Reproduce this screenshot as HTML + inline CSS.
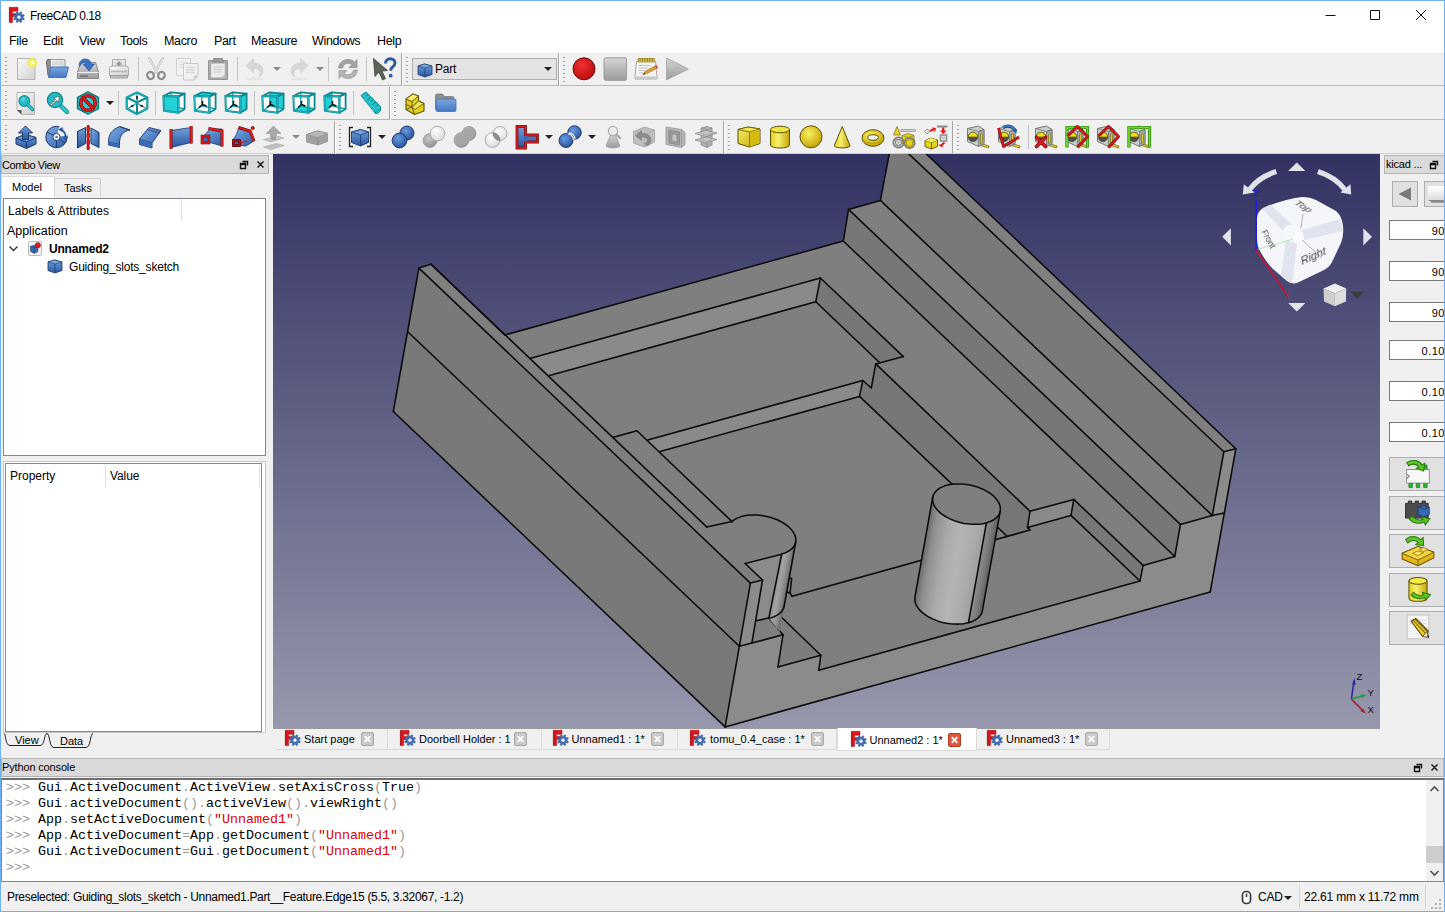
<!DOCTYPE html><html><head><meta charset="utf-8"><title>FreeCAD 0.18</title><style>
*{box-sizing:border-box;margin:0;padding:0}
html,body{width:1445px;height:912px;overflow:hidden;background:#f0f0f0;font-family:"Liberation Sans",sans-serif;font-size:12px;color:#000}
.a{position:absolute}
.t{position:absolute;white-space:nowrap;line-height:1}
#win{position:absolute;left:0;top:0;width:1445px;height:912px;border:1px solid #6eb0f0;background:#f0f0f0;overflow:hidden}
.mono{font-family:"Liberation Mono",monospace;font-size:13.33px}
.hl{position:absolute;height:1px;background:#a0a0a0}
.vl{position:absolute;width:1px;background:#a0a0a0}
.sep{position:absolute;width:1px;background:#c4c4c4;height:24px}
.grip{position:absolute;width:2px;height:24px;background:repeating-linear-gradient(#f0f0f0 0 1px,#9c9c9c 1px 2.5px,#fdfdfd 2.5px 3px,#f0f0f0 3px 4px)}
.dd{position:absolute;width:0;height:0;border-left:4px solid transparent;border-right:4px solid transparent;border-top:4px solid #222}
.ddg{border-top-color:#8a8a8a}
svg{position:absolute;overflow:visible}
</style></head><body><div id="win"><div class="a" style="left:0;top:0;width:1443px;height:51px;background:#fff"></div><div class="hl" style="left:0;top:51px;width:1443px;background:#f8f8f8"></div><svg style="left:8px;top:6px" width="16" height="16" viewBox="0 0 16 16"><path d="M.3 .3h8.700v4h-5.400v2.300h4v3h-4v6h-3.300z" fill="#e0161c" stroke="#8a1014" stroke-width=".5"/><path d="M.800 .8v14.500" stroke="#a01016" stroke-width=".8"/><path d="M15.41 11.64L14.84 13.01L13.32 12.61L12.41 13.52L12.81 15.04L11.44 15.61L10.64 14.25L9.36 14.25L8.56 15.61L7.19 15.04L7.59 13.52L6.68 12.61L5.16 13.01L4.59 11.64L5.95 10.84L5.95 9.56L4.59 8.76L5.16 7.39L6.68 7.79L7.59 6.88L7.19 5.36L8.56 4.79L9.36 6.15L10.64 6.15L11.44 4.79L12.81 5.36L12.41 6.88L13.32 7.79L14.84 7.39L15.41 8.76L14.05 9.56L14.05 10.84Z" fill="#4470b4" stroke="#2c4e8c" stroke-width=".5"/><circle cx="10" cy="10.200" r="1.600" fill="#fff"/></svg><div class="t" style="left:29px;top:9px;font-size:12px;letter-spacing:-0.5px">FreeCAD 0.18</div><div class="t" style="left:8px;top:34px;font-size:12.5px;letter-spacing:-0.35px">File</div><div class="t" style="left:42px;top:34px;font-size:12.5px;letter-spacing:-0.35px">Edit</div><div class="t" style="left:78px;top:34px;font-size:12.5px;letter-spacing:-0.35px">View</div><div class="t" style="left:119px;top:34px;font-size:12.5px;letter-spacing:-0.35px">Tools</div><div class="t" style="left:163px;top:34px;font-size:12.5px;letter-spacing:-0.35px">Macro</div><div class="t" style="left:213px;top:34px;font-size:12.5px;letter-spacing:-0.35px">Part</div><div class="t" style="left:250px;top:34px;font-size:12.5px;letter-spacing:-0.35px">Measure</div><div class="t" style="left:311px;top:34px;font-size:12.5px;letter-spacing:-0.35px">Windows</div><div class="t" style="left:376px;top:34px;font-size:12.5px;letter-spacing:-0.35px">Help</div><svg style="left:1319px;top:4px" width="120" height="20"><path d="M5.5 10.5h10M50.5 5.5h9v9h-9zM96 5l10 10M106 5l-10 10" fill="none" stroke="#111" stroke-width="1"/></svg><div class="hl" style="left:0;top:84px;width:1443px;background:#b9b9b9"></div><div class="hl" style="left:0;top:118px;width:1443px;background:#b9b9b9"></div><div class="hl" style="left:0;top:152px;width:1443px;background:#d0d0d0"></div><svg width="0" height="0" style="left:0;top:0"><defs>
<linearGradient id="gB" x1="0" y1="0" x2="0" y2="1"><stop offset="0" stop-color="#6fa0dc"/><stop offset="1" stop-color="#2a56a0"/></linearGradient>
<linearGradient id="gB3" x1="0" y1="0" x2="0" y2="1"><stop offset="0" stop-color="#79a6e0"/><stop offset="1" stop-color="#4678c4"/></linearGradient>
<linearGradient id="gB2" x1="0" y1="0" x2="1" y2="1"><stop offset="0" stop-color="#7fb0e8"/><stop offset="1" stop-color="#2c5aa6"/></linearGradient>
<linearGradient id="gY" x1="0" y1="0" x2="1" y2="1"><stop offset="0" stop-color="#f8f060"/><stop offset="1" stop-color="#c8a80a"/></linearGradient>
<linearGradient id="gY2" x1="0" y1="0" x2="1" y2="0"><stop offset="0" stop-color="#e6cc18"/><stop offset=".4" stop-color="#f8f070"/><stop offset="1" stop-color="#c4a408"/></linearGradient>
<linearGradient id="gG" x1="0" y1="0" x2="0" y2="1"><stop offset="0" stop-color="#d4d4d4"/><stop offset="1" stop-color="#9c9c9c"/></linearGradient>
<linearGradient id="gG2" x1="0" y1="0" x2="1" y2="1"><stop offset="0" stop-color="#fafafa"/><stop offset="1" stop-color="#d0d0d0"/></linearGradient>
<linearGradient id="gT" x1="0" y1="0" x2="1" y2="1"><stop offset="0" stop-color="#34dce2"/><stop offset="1" stop-color="#14b4bc"/></linearGradient>
<radialGradient id="gR" cx=".4" cy=".35" r=".7"><stop offset="0" stop-color="#f03030"/><stop offset="1" stop-color="#b80c0c"/></radialGradient>
<radialGradient id="gYs" cx=".4" cy=".35" r=".7"><stop offset="0" stop-color="#f8f060"/><stop offset="1" stop-color="#c4a000"/></radialGradient>
<radialGradient id="gBs" cx=".4" cy=".35" r=".7"><stop offset="0" stop-color="#6a9ce0"/><stop offset="1" stop-color="#244e98"/></radialGradient>
<radialGradient id="gGs" cx=".4" cy=".35" r=".7"><stop offset="0" stop-color="#c8c8c8"/><stop offset="1" stop-color="#8e8e8e"/></radialGradient>
<radialGradient id="gWs" cx=".4" cy=".35" r=".7"><stop offset="0" stop-color="#ffffff"/><stop offset="1" stop-color="#d8d8d8"/></radialGradient>
</defs></svg><svg style="left:13px;top:56px" width="24" height="24" viewBox="0 0 24 24"><path d="M3.500 1.500h17.500v21h-17.500z" fill="url(#gG2)" stroke="#b4b4b4"/><circle cx="18.300" cy="5.700" r="4.800" fill="#f2ec3c" opacity=".8"/><circle cx="18.300" cy="5.700" r="2.900" fill="#f8f480"/><circle cx="18.300" cy="5.700" r="1.200" fill="#fffff4"/></svg><svg style="left:44px;top:56px" width="24" height="24" viewBox="0 0 24 24"><path d="M1.500 4.500l1-2h6l1 2h3v14h-9.500z" fill="#8c8c8c" stroke="#6a6a6a"/><path d="M5.500 2.500h14.500v12h-14.500z" fill="url(#gG2)" stroke="#9a9a9a"/><path d="M7 5h11M7 7h11" stroke="#c8c8c8"/><path d="M5.800 10h17.700l-2.500 10.500h-17.500z" fill="url(#gB3)" stroke="#4676bc"/></svg><svg style="left:75px;top:56px" width="24" height="24" viewBox="0 0 24 24"><path d="M1.500 15l3-9.500h15l3 9.500v6.500h-21z" fill="url(#gG)" stroke="#8a8a8a"/><path d="M1.500 15.500h21" stroke="#f0f0f0"/><path d="M4 19h8" stroke="#6e6e6e" stroke-width="1.400"/><path d="M3.500 9.500c-1.500-5 3.500-9 8.500-7c2 1 3 2.500 3.500 4.500h3l-5.500 7l-6-7h3.200c-.5-2-3.700-3-6.700 2.500z" fill="#3a72c0" stroke="#2a5a9e" stroke-width=".7"/></svg><svg style="left:106px;top:56px" width="24" height="24" viewBox="0 0 24 24"><path d="M5.500 2.500h13v8h-13z" fill="#e4e4e4" stroke="#b0b0b0"/><path d="M12 4l3.500 3.500h-2v2.500h-3v-2.500h-2z" fill="#9a9a9a"/><path d="M2.500 11.500c0-1.500 1-2.500 2.500-2.500h14c1.500 0 2.500 1 2.500 2.500v7h-19z" fill="url(#gG2)" stroke="#a8a8a8"/><path d="M3.500 18.500h17v2.500h-17z" fill="#c4c4c4" stroke="#9a9a9a"/><path d="M4 14.500h16" stroke="#b4b4b4" stroke-width="1.600"/></svg><svg style="left:143px;top:56px" width="24" height="24" viewBox="0 0 24 24"><path d="M5.500 1.500l7.500 14M18.500 1.500l-7.500 14" stroke="#c4c4c4" stroke-width="2.600" stroke-linecap="round"/><path d="M5.500 1.500l7.500 14M18.500 1.500l-7.500 14" stroke="#e8e8e8" stroke-width="1" stroke-linecap="round"/><ellipse cx="6.500" cy="18.500" rx="3.300" ry="3.600" transform="rotate(-30 6.500 18.500)" fill="none" stroke="#8e8e8e" stroke-width="2.200"/><ellipse cx="17.500" cy="18.500" rx="3.300" ry="3.600" transform="rotate(30 17.500 18.500)" fill="none" stroke="#8e8e8e" stroke-width="2.200"/></svg><svg style="left:174px;top:56px" width="24" height="24" viewBox="0 0 24 24"><path d="M1.500 1.500h14v17h-14z" fill="#f2f2f2" stroke="#d0d0d0"/><path d="M4 5h9M4 7.500h9M4 10h9" stroke="#dcdcdc"/><path d="M8.500 6.500h14.500v12.500l-4 4h-10.500z" fill="#f2f2f2" stroke="#cacaca"/><path d="M11 10.500h9M11 13h9M11 15.500h9" stroke="#d8d8d8" stroke-width="1.400"/><path d="M23 19h-4v4z" fill="#d8d8d8" stroke="#c0c0c0" stroke-width=".6"/></svg><svg style="left:205px;top:56px" width="24" height="24" viewBox="0 0 24 24"><path d="M2.500 3.500h19v19h-19z" fill="#a8a8a8" stroke="#969696"/><path d="M5 6.500h14v14h-14z" fill="#ececec" stroke="#c0c0c0" stroke-width=".6"/><path d="M7.500 1.500h9l1 3.500h-11z" fill="#9a9a9a" stroke="#858585" stroke-width=".8"/><path d="M7.500 10h9M7.500 12.500h9M7.500 15h7" stroke="#d2d2d2" stroke-width="1.300"/><path d="M19 17v3.500h-3.500z" fill="#bdbdbd"/></svg><svg style="left:242px;top:56px" width="24" height="24" viewBox="0 0 24 24"><path d="M3 8.500l7.500-7v4.500c6 0 9.500 3.500 9.500 8c0 3-1.500 5-4 6c1-1.500 1.500-3 1-5c-.7-2.500-3-3.500-6.500-3.500v4.500z" fill="#d6d6d6" stroke="#cfcfcf" stroke-width=".6"/><ellipse cx="12" cy="22" rx="9" ry="1.500" fill="#dedede" opacity=".6"/></svg><svg style="left:286px;top:56px" width="24" height="24" viewBox="0 0 24 24"><path d="M21 8.500l-7.500-7v4.500c-6 0-9.500 3.500-9.500 8c0 3 1.500 5 4 6c-1-1.500-1.500-3-1-5c.7-2.500 3-3.500 6.500-3.500v4.500z" fill="#d6d6d6" stroke="#cfcfcf" stroke-width=".6"/><ellipse cx="12" cy="22" rx="9" ry="1.500" fill="#dedede" opacity=".6"/></svg><svg style="left:334.5px;top:56px" width="24" height="24" viewBox="0 0 24 24"><path d="M2.500 11c.5-5 4-8.500 9.500-8.500c3 0 5 1 6.500 2.500l2.500-2.500v8h-8l2.800-2.800c-1-1-2.300-1.500-3.800-1.500c-2.800 0-4.800 2-5.500 4.800z" fill="#a4a4a4" stroke="#8e8e8e" stroke-width=".7"/><path d="M21.500 13c-.5 5-4 8.500-9.500 8.500c-3 0-5-1-6.500-2.500l-2.500 2.500v-8h8l-2.800 2.800c1 1 2.300 1.500 3.800 1.500c2.800 0 4.800-2 5.500-4.800z" fill="#b4b4b4" stroke="#989898" stroke-width=".7"/></svg><svg style="left:370.5px;top:56px" width="24" height="24" viewBox="0 0 24 24"><path d="M1.500 1.500l1.500 18l4-4.500l3.500 8l3-1.400l-3.600-7.600l5.600-.5z" fill="#5c6258" stroke="#3e423a" stroke-width=".8"/><path d="M13.500 6.500c0-3 2-4.800 4.800-4.800c2.700 0 4.700 1.800 4.700 4.300c0 2.200-1.300 3.200-2.600 4.200c-1.100.9-1.700 1.600-1.700 3.600" fill="none" stroke="#2c5a9c" stroke-width="2.900"/><circle cx="18.700" cy="18.700" r="1.900" fill="#2c5a9c"/></svg><svg style="left:571px;top:56px" width="24" height="24" viewBox="0 0 24 24"><circle cx="12" cy="11.800" r="11" fill="url(#gR)" stroke="#6e0c0c" stroke-width="1"/></svg><svg style="left:602px;top:56px" width="24" height="24" viewBox="0 0 24 24"><rect x="1" y="0.800" width="22.500" height="22.500" rx="1.500" fill="url(#gG)" stroke="#9c9c9c"/></svg><svg style="left:633px;top:56px" width="24" height="24" viewBox="0 0 24 24"><path d="M2.500 4.500h19l1.500 15.500v2h-22v-2z" fill="#f4f4f4" stroke="#a8a8a8"/><path d="M1.500 20.500h21.500" stroke="#c8c8c8" stroke-width="2"/><path d="M4 1.500h16.500v3.500h-16.500z" fill="#d4b848" stroke="#9c8420" stroke-width=".7"/><path d="M6 1v3M8.500 1v3M11 1v3M13.500 1v3M16 1v3M18.500 1v3" stroke="#8a7418" stroke-width=".8"/><path d="M5 8.500h11M5 11h9M5 13.500h6M5 16h4" stroke="#c4c4c4" stroke-width="1.200"/><path d="M9 17.500l2.500-3.500l10.500-5.500l1.500 2.500l-10.500 5.500z" fill="#e0a030" stroke="#9a6a18" stroke-width=".6"/><path d="M21 8.800l1.700-.8l1.300 2.400l-1.600 1z" fill="#e04848"/><path d="M9 17.500l1.200-1.700l1 1.600z" fill="#444"/></svg><svg style="left:664px;top:56px" width="24" height="24" viewBox="0 0 24 24"><path d="M1.500 1l22 11l-22 11z" fill="url(#gG)" stroke="#a4a4a4" stroke-width=".8"/></svg><svg style="left:13px;top:90px" width="24" height="24" viewBox="0 0 24 24"><path d="M3 1.500h17.500v22h-13l-4.500-4.500z" fill="url(#gG2)" stroke="#b4b4b4"/><path d="M3 19l4.500 0v4.500z" fill="#555"/><circle cx="10.300" cy="10" r="5.300" fill="#22bcc4" stroke="#128e96" stroke-width="1.200"/><circle cx="9" cy="8.500" r="2.200" fill="#5cd8de" opacity=".8"/><path d="M14 14l4.500 4.500" stroke="#128e96" stroke-width="3.400" stroke-linecap="round"/><path d="M14 14l4.500 4.500" stroke="#28c4cc" stroke-width="1.800" stroke-linecap="round"/></svg><svg style="left:44.5px;top:90px" width="24" height="24" viewBox="0 0 24 24"><path d="M14 14l7 7" stroke="#0f858c" stroke-width="4.400" stroke-linecap="round"/><path d="M14 14l7 7" stroke="#2cc8d0" stroke-width="2.600" stroke-linecap="round"/><circle cx="9" cy="9" r="7.600" fill="#22bcc4" stroke="#0f858c" stroke-width="1.300"/><path d="M4.500 13.500l5-5l-1.800-1.800l6-1.400l-1.400 6l-1.800-1.800l-5 5z" fill="#f4f4f4" stroke="#555" stroke-width=".7"/></svg><svg style="left:75px;top:90px" width="24" height="24" viewBox="0 0 24 24"><path d="M12 .8l10.500 5.600v11.200l-10.500 5.600l-10.500-5.600v-11.200z" fill="#20b8c0" stroke="#0b7a82" stroke-width="1.300"/><path d="M12 3.500l8 4.300v8.400l-8 4.300l-8-4.300v-8.400z" fill="#30ccd4"/><circle cx="12" cy="12" r="7.300" fill="none" stroke="#7c0c0c" stroke-width="3.600"/><circle cx="12" cy="12" r="7.300" fill="none" stroke="#dc1c1c" stroke-width="2.300"/><path d="M6.800 6.800l10.400 10.400" stroke="#7c0c0c" stroke-width="3.600"/><path d="M6.800 6.800l10.400 10.400" stroke="#dc1c1c" stroke-width="2.300"/></svg><svg style="left:124px;top:90px" width="24" height="24" viewBox="0 0 24 24"><path d="M12 1.500l10.300 5v11l-10.300 5.500l-10.300-5.500v-11z" fill="#fff" stroke="#0b8890" stroke-width="2.200" stroke-linejoin="round"/><path d="M1.700 6.500l10.300 5l10.300-5M12 11.500v11.500" fill="none" stroke="#0b8890" stroke-width="2"/><path d="M12 1.500v9M12 12l-9 5.500M12 12l9 5.500" stroke="#14a4ac" stroke-width="1.200"/><path d="M12 5v3.500M6 15.500l2.500-1M18 15.500l-2.500-1" stroke="#111" stroke-width="1.500"/><path d="M12 1.500l10.300 5v11l-10.300 5.500l-10.300-5.500v-11z" fill="none" stroke="#28c8d0" stroke-width=".8"/></svg><svg style="left:161px;top:90px" width="24" height="24" viewBox="0 0 24 24"><polygon points="1.4,5 8.800,1.400 22.600,2.600 22.600,18 16.400,21.800 1.900,19.800" fill="#fff"/><path d="M8.800 1.400v13.400l-6.900 5M9 14.800l13.600 3.200" fill="none" stroke="#14a0a8" stroke-width="1.300"/><polygon points="1.4,5 16.4,5.400 16.400,21.800 1.900,19.800" fill="#24d0d8"/><polygon points="1.4,5 16.4,5.400 16.400,21.800 1.900,19.800" fill="none" stroke="#0b8890" stroke-width="2" stroke-linejoin="round"/><polygon points="1.4,5 8.800,1.400 22.600,2.600 16.400,5.400" fill="none" stroke="#0b8890" stroke-width="1.800" stroke-linejoin="round"/><polygon points="16.400,5.400 22.600,2.600 22.600,18 16.400,21.800" fill="none" stroke="#0b8890" stroke-width="1.800" stroke-linejoin="round"/><polygon points="1.4,5 16.4,5.400 16.400,21.800 1.900,19.800" fill="none" stroke="#2ccad2" stroke-width=".7"/></svg><svg style="left:192px;top:90px" width="24" height="24" viewBox="0 0 24 24"><polygon points="1.4,5 8.800,1.400 22.600,2.600 22.600,18 16.400,21.800 1.900,19.800" fill="#fff"/><path d="M8.800 1.400v13.400l-6.900 5M9 14.800l13.600 3.200" fill="none" stroke="#14a0a8" stroke-width="1.300"/><polygon points="1.4,5 8.800,1.400 22.600,2.600 16.400,5.400" fill="#24d0d8"/><path d="M9.500 10v3.500l-3.500 3M9.500 13.500l4 1.500" stroke="#111" stroke-width="1.500" fill="none"/><polygon points="1.4,5 16.4,5.400 16.400,21.800 1.900,19.800" fill="none" stroke="#0b8890" stroke-width="2" stroke-linejoin="round"/><polygon points="1.4,5 8.800,1.400 22.600,2.600 16.400,5.400" fill="none" stroke="#0b8890" stroke-width="1.800" stroke-linejoin="round"/><polygon points="16.400,5.400 22.600,2.600 22.600,18 16.400,21.800" fill="none" stroke="#0b8890" stroke-width="1.800" stroke-linejoin="round"/><polygon points="1.4,5 16.4,5.400 16.400,21.800 1.900,19.800" fill="none" stroke="#2ccad2" stroke-width=".7"/></svg><svg style="left:223px;top:90px" width="24" height="24" viewBox="0 0 24 24"><polygon points="1.4,5 8.800,1.400 22.600,2.600 22.600,18 16.400,21.800 1.900,19.800" fill="#fff"/><path d="M8.800 1.400v13.400l-6.900 5M9 14.800l13.600 3.200" fill="none" stroke="#14a0a8" stroke-width="1.300"/><polygon points="16.400,5.400 22.600,2.600 22.600,18 16.400,21.800" fill="#24d0d8"/><path d="M9.500 10v3.500l-3.500 3M9.500 13.500l4 1.500" stroke="#111" stroke-width="1.500" fill="none"/><polygon points="1.4,5 16.4,5.400 16.400,21.800 1.900,19.800" fill="none" stroke="#0b8890" stroke-width="2" stroke-linejoin="round"/><polygon points="1.4,5 8.800,1.400 22.600,2.600 16.400,5.400" fill="none" stroke="#0b8890" stroke-width="1.800" stroke-linejoin="round"/><polygon points="16.400,5.400 22.600,2.600 22.600,18 16.400,21.800" fill="none" stroke="#0b8890" stroke-width="1.800" stroke-linejoin="round"/><polygon points="1.4,5 16.4,5.400 16.400,21.800 1.900,19.800" fill="none" stroke="#2ccad2" stroke-width=".7"/></svg><svg style="left:260px;top:90px" width="24" height="24" viewBox="0 0 24 24"><polygon points="1.4,5 8.800,1.400 22.600,2.600 22.600,18 16.400,21.800 1.900,19.800" fill="#fff"/><polygon points="8.800,1.400 22.600,2.600 22.600,18 9,14.800" fill="#24d0d8"/><path d="M8.800 1.400v13.400l-6.900 5M9 14.800l13.600 3.200" fill="none" stroke="#14a0a8" stroke-width="1.300"/><path d="M9.500 10v3.500l-3.500 3M9.500 13.500l4 1.500" stroke="#111" stroke-width="1.500" fill="none"/><polygon points="1.4,5 16.4,5.400 16.400,21.800 1.900,19.800" fill="none" stroke="#0b8890" stroke-width="2" stroke-linejoin="round"/><polygon points="1.4,5 8.800,1.400 22.600,2.600 16.400,5.400" fill="none" stroke="#0b8890" stroke-width="1.800" stroke-linejoin="round"/><polygon points="16.400,5.400 22.600,2.600 22.600,18 16.400,21.800" fill="none" stroke="#0b8890" stroke-width="1.800" stroke-linejoin="round"/><polygon points="1.4,5 16.4,5.400 16.400,21.800 1.900,19.800" fill="none" stroke="#2ccad2" stroke-width=".7"/></svg><svg style="left:291px;top:90px" width="24" height="24" viewBox="0 0 24 24"><polygon points="1.4,5 8.800,1.400 22.600,2.600 22.600,18 16.400,21.800 1.900,19.800" fill="#fff"/><polygon points="1.900,19.800 9,14.800 22.600,18 16.400,21.800" fill="#24d0d8"/><path d="M8.800 1.400v13.400l-6.900 5M9 14.800l13.600 3.200" fill="none" stroke="#14a0a8" stroke-width="1.300"/><path d="M9.500 10v3.500l-3.500 3M9.500 13.500l4 1.500" stroke="#111" stroke-width="1.500" fill="none"/><polygon points="1.4,5 16.4,5.400 16.400,21.800 1.900,19.800" fill="none" stroke="#0b8890" stroke-width="2" stroke-linejoin="round"/><polygon points="1.4,5 8.800,1.400 22.600,2.600 16.400,5.400" fill="none" stroke="#0b8890" stroke-width="1.800" stroke-linejoin="round"/><polygon points="16.400,5.400 22.600,2.600 22.600,18 16.400,21.800" fill="none" stroke="#0b8890" stroke-width="1.800" stroke-linejoin="round"/><polygon points="1.4,5 16.4,5.400 16.400,21.800 1.900,19.800" fill="none" stroke="#2ccad2" stroke-width=".7"/></svg><svg style="left:322px;top:90px" width="24" height="24" viewBox="0 0 24 24"><polygon points="1.4,5 8.800,1.400 22.600,2.600 22.600,18 16.400,21.800 1.900,19.800" fill="#fff"/><polygon points="1.4,5 8.800,1.400 9,14.800 1.900,19.800" fill="#24d0d8"/><path d="M8.800 1.400v13.400l-6.900 5M9 14.800l13.600 3.200" fill="none" stroke="#14a0a8" stroke-width="1.300"/><path d="M9.500 10v3.500l-3.500 3M9.500 13.500l4 1.500" stroke="#111" stroke-width="1.500" fill="none"/><polygon points="1.4,5 16.4,5.400 16.400,21.800 1.900,19.800" fill="none" stroke="#0b8890" stroke-width="2" stroke-linejoin="round"/><polygon points="1.4,5 8.800,1.400 22.600,2.600 16.400,5.400" fill="none" stroke="#0b8890" stroke-width="1.800" stroke-linejoin="round"/><polygon points="16.400,5.400 22.600,2.600 22.600,18 16.400,21.800" fill="none" stroke="#0b8890" stroke-width="1.800" stroke-linejoin="round"/><polygon points="1.4,5 16.4,5.400 16.400,21.800 1.900,19.800" fill="none" stroke="#2ccad2" stroke-width=".7"/></svg><svg style="left:358px;top:90px" width="24" height="24" viewBox="0 0 24 24"><path d="M2 4.500l5-3.500l14.500 14.500v4l-3 3h-2z" fill="#22c4cc" stroke="#0d8c94" stroke-width="1"/><path d="M16.500 22.500c0-2.500 2-4.500 5-3.500" fill="none" stroke="#0d8c94" stroke-width="1"/><path d="M9 3.500l-2 2M11.500 6l-3 3M14 8.500l-2 2M16.500 11l-3 3M19 13.500l-2 2" stroke="#0a6a72" stroke-width="1"/></svg><svg style="left:402px;top:90px" width="24" height="24" viewBox="0 0 24 24"><path d="M3 8l7-5l5.500 2v5l5.500 2.500v7.500l-9.500 3.500l-8.500-5z" fill="#e4d01c" stroke="#5c5208" stroke-width="1.100" stroke-linejoin="round"/><path d="M3 8l6 2.500l6.500-5.500M9 10.500v5.500l-6-2.500M9 16l6.500-6l5.500 2.500M9 16l2.500 7.500M9 16l-6 2.500" fill="none" stroke="#5c5208" stroke-width=".9"/><path d="M3 8l7-5l5.500 2l-6.500 5.500z" fill="#f6ee68" stroke="#5c5208" stroke-width=".8"/><path d="M9.200 16l6.300-6l5.500 2.500l-9 6z" fill="#f2e650" stroke="#5c5208" stroke-width=".8"/></svg><svg style="left:433px;top:90px" width="24" height="24" viewBox="0 0 24 24"><path d="M1.500 4.500c0-1 .6-1.500 1.500-1.500h5.500l2 2.500h8c1 0 1.500.5 1.500 1.500v11h-18.500z" fill="#8e8e8e" stroke="#787878" stroke-width=".8"/><path d="M2 9.500c0-1 .6-1.500 1.500-1.500h17c1 0 1.500.5 1.500 1.500v9.500c0 1-.5 1.500-1.500 1.500h-17c-.900 0-1.500-.5-1.500-1.500z" fill="url(#gB3)" stroke="#4272b8" stroke-width=".8"/></svg><svg style="left:12.5px;top:124px" width="24" height="24" viewBox="0 0 24 24"><path d="M2 13l9-3.500l11 3v6.500l-9.500 4.500l-10.500-4.500z" fill="url(#gB)" stroke="#1c3768" stroke-width="1" stroke-linejoin="round"/><path d="M2 13l10.500 4l9.500-4.500M12.500 17v6.500" fill="none" stroke="#1c3768" stroke-width=".9"/><path d="M2 13l9-3.500l11 3l-9.500 4.500z" fill="#6b9cd8" stroke="#1c3768" stroke-width=".8"/><path d="M11.500 1l7 7h-4v6.500h-6v-6.500h-4z" fill="url(#gB)" stroke="#1c3768" stroke-width="1" stroke-linejoin="round"/></svg><svg style="left:44px;top:124px" width="24" height="24" viewBox="0 0 24 24"><circle cx="11.500" cy="12" r="10.700" fill="url(#gB2)" stroke="#1c3768" stroke-width="1"/><path d="M11.500 12l2.500-10.500l8 -1l1 10z" fill="#f0f0f0"/><path d="M11.500 12v10.700M11.500 12l-9.500-5M11.500 12l8.500 6.500" stroke="#1c3768" stroke-width=".9"/><circle cx="11.500" cy="12" r="3.600" fill="#f0f0f0" stroke="#1c3768" stroke-width=".9"/><circle cx="11.500" cy="12" r="1.300" fill="#4c7cc0"/><path d="M15.500 4.500c4 1.500 6 5.500 4.500 10" fill="none" stroke="#2c5aa6" stroke-width="2"/><path d="M13 4.500l5-2.500l-.5 5z" fill="#2c5aa6"/></svg><svg style="left:75px;top:124px" width="24" height="24" viewBox="0 0 24 24"><path d="M1.500 6.500l8-4v16l-8 4.500z" fill="url(#gB)" stroke="#1c3768" stroke-width="1"/><path d="M15 3l8 4.500v15l-8-4z" fill="url(#gB2)" stroke="#1c3768" stroke-width="1"/><path d="M12.200 1.500v22" stroke="#7c0c0c" stroke-width="3.200" stroke-dasharray="4.200 2.600" stroke-linecap="round"/><path d="M12.200 1.500v22" stroke="#e01c1c" stroke-width="1.800" stroke-dasharray="4.200 2.600" stroke-linecap="round"/></svg><svg style="left:105.5px;top:124px" width="24" height="24" viewBox="0 0 24 24"><path d="M1.500 17c0-8 4-13 11.500-15.500l10 3.500c-6.500 1-10 5-10.500 12v5.500l-11-2.500z" fill="url(#gB2)" stroke="#1c3768" stroke-width=".9" stroke-linejoin="round"/><path d="M1.500 17l11 2.500M13 2l10 3" stroke="#1c3768" stroke-width=".7" fill="none"/><path d="M1.500 17l11 2.500v3l-11-2.500z" fill="#3c6cb4"/></svg><svg style="left:137px;top:124px" width="24" height="24" viewBox="0 0 24 24"><path d="M1.500 14l9.500-11.500l12 3l-9 12.500v5l-12.500-3.500z" fill="url(#gB2)" stroke="#1c3768" stroke-width=".9" stroke-linejoin="round"/><path d="M1.500 14l12.500 4M9.500 4.500l12 3.500" stroke="#1c3768" stroke-width=".7" fill="none"/><path d="M1.500 14l12.500 4v5l-12.500-3.500z" fill="#3c6cb4"/></svg><svg style="left:168px;top:124px" width="24" height="24" viewBox="0 0 24 24"><path d="M2 5.500l20-3v15l-20 5z" fill="url(#gB)" stroke="#1c3768" stroke-width=".8"/><path d="M2 4v20M22.200 1v17.500" stroke="#7c0c0c" stroke-width="3"/><path d="M2 4v20M22.200 1v17.500" stroke="#e01c1c" stroke-width="1.800"/></svg><svg style="left:199px;top:124px" width="24" height="24" viewBox="0 0 24 24"><path d="M2 13l8-9h12v17l-12-3.500z" fill="url(#gB2)" stroke="#1c3768" stroke-width=".8"/><path d="M8.500 3.500l13.500 2.500v15.500" fill="none" stroke="#7c0c0c" stroke-width="3"/><path d="M8.500 3.500l13.500 2.500v15.500" fill="none" stroke="#e01c1c" stroke-width="1.800"/><rect x="2" y="11" width="7" height="7" fill="#3a68b0" stroke="#7c0c0c" stroke-width="2.600"/><rect x="2" y="11" width="7" height="7" fill="none" stroke="#e01c1c" stroke-width="1.400"/></svg><svg style="left:230px;top:124px" width="24" height="24" viewBox="0 0 24 24"><path d="M1.500 15c3-3 5-7 6-12l11 3c2 3 3.500 6 4.500 10l-8 5l-13-1z" fill="url(#gB2)" stroke="#1c3768" stroke-width=".8"/><path d="M7.500 2.500l11.500 3.500l4 10" fill="none" stroke="#7c0c0c" stroke-width="3"/><path d="M7.500 2.500l11.500 3.500l4 10" fill="none" stroke="#e01c1c" stroke-width="1.800"/><path d="M1.500 14.500h8v7h-8z" fill="#b01010" stroke="#7c0c0c" stroke-width="1"/><path d="M3.500 16.500h4v3h-4z" fill="#3a68b0" stroke="#500" stroke-width=".6"/><path d="M9.500 18l7-2.500" stroke="#d01818" stroke-width="1.200" stroke-dasharray="2.500 1.500"/><circle cx="21.700" cy="3" r="1.600" fill="#d01818" stroke="#600" stroke-width=".7"/></svg><svg style="left:261px;top:124px" width="24" height="24" viewBox="0 0 24 24"><path d="M11.500 1l7.500 7.500h-4.500v6.500h-6v-6.500h-4.500z" fill="#a8a8a8" stroke="#9a9a9a" stroke-width=".6"/><path d="M1.500 14.500l13-3.500l7.500 2l-13 4z" fill="#c4c4c4" stroke="#a8a8a8" stroke-width=".6"/><path d="M9 11.500h5v3.500h-5z" fill="#a0a0a0"/><path d="M1.500 22l13-3.500l7.500 2l-13 4z" fill="#c0c0c0" stroke="#a4a4a4" stroke-width=".6"/></svg><svg style="left:304px;top:124px" width="24" height="24" viewBox="0 0 24 24"><path d="M1.500 9.500l11-3.500l10 2.500v8l-9.500 3.500l-11.500-3z" fill="#a0a0a0" stroke="#909090" stroke-width=".8"/><path d="M1.500 9.500l11.500 3l9.500-4.500l-10-2z" fill="#b8b8b8" stroke="#909090" stroke-width=".7"/><path d="M13 12.500v7.500" stroke="#8a8a8a" stroke-width=".8"/></svg><svg style="left:347px;top:124px" width="24" height="24" viewBox="0 0 24 24"><path d="M5 2.500h-3.500v19h3.500M19 2.500h3.500v19h-3.500" fill="none" stroke="#222" stroke-width="1.300"/><path d="M3.500 7l9-2.500l8 2.500v10.500l-8 3.500l-9-3.500z" fill="url(#gB)" stroke="#1c3768" stroke-width=".9" stroke-linejoin="round"/><path d="M3.500 7l9 3l8-3l-8-2.500z" fill="#6e9edc" stroke="#1c3768" stroke-width=".7"/><path d="M12.500 10v11" stroke="#1c3768" stroke-width=".8"/></svg><svg style="left:390px;top:124px" width="24" height="24" viewBox="0 0 24 24"><circle cx="16" cy="8" r="7" fill="url(#gBs)" stroke="#1c3768" stroke-width=".9"/><circle cx="8.500" cy="15.500" r="7.400" fill="url(#gBs)" stroke="#1c3768" stroke-width=".9"/></svg><svg style="left:421px;top:124px" width="24" height="24" viewBox="0 0 24 24"><circle cx="8" cy="15.500" r="7" fill="url(#gGs)" stroke="#a0a0a0" stroke-width=".8"/><circle cx="15.500" cy="8.500" r="7.300" fill="url(#gWs)" stroke="#a8a8a8" stroke-width=".9"/></svg><svg style="left:452px;top:124px" width="24" height="24" viewBox="0 0 24 24"><circle cx="16" cy="8.500" r="7" fill="url(#gGs)" stroke="#9a9a9a" stroke-width=".8"/><circle cx="8.500" cy="15" r="7.400" fill="url(#gGs)" stroke="#9a9a9a" stroke-width=".8"/><circle cx="15.500" cy="9" r="6" fill="#a6a6a6"/><circle cx="9" cy="14.500" r="6.400" fill="#a6a6a6"/></svg><svg style="left:482.5px;top:124px" width="24" height="24" viewBox="0 0 24 24"><circle cx="8.500" cy="15" r="7.400" fill="url(#gWs)" stroke="#a4a4a4" stroke-width=".9"/><circle cx="16" cy="8.500" r="7" fill="url(#gWs)" stroke="#a4a4a4" stroke-width=".9" fill-opacity=".8"/><path d="M9.300 7.700a7.400 7.400 0 0 1 6.600 7.800a7 7 0 0 1-6.600-7.800z" fill="#8e8e8e" stroke="#7e7e7e" stroke-width=".6"/></svg><svg style="left:514px;top:124px" width="24" height="24" viewBox="0 0 24 24"><path d="M2 1.500h8.500v8.500h12v7h-12v6h-8.500z" fill="url(#gB)" stroke="#7c0c0c" stroke-width="2.800"/><path d="M2 1.500h8.500v8.500h12v7h-12v6h-8.500z" fill="none" stroke="#e01c1c" stroke-width="1.500"/><path d="M10.500 11v5.500" stroke="#3a6ab0" stroke-width="3.500"/></svg><svg style="left:557px;top:124px" width="24" height="24" viewBox="0 0 24 24"><circle cx="16.500" cy="7.500" r="6.800" fill="url(#gBs)" stroke="#1c3768" stroke-width=".9"/><circle cx="8" cy="15.500" r="7" fill="url(#gBs)" stroke="#1c3768" stroke-width=".9"/><path d="M9.700 8.700a7 7 0 0 1 5.700 6.200M11.200 7.600a6.800 6.800 0 0 1 5.700 6.500" fill="none" stroke="#f0f0f0" stroke-width="1.300"/></svg><svg style="left:600px;top:124px" width="24" height="24" viewBox="0 0 24 24"><path d="M5 21l5-12h4l5 12c-2 2.500-12 2.500-14 0z" fill="url(#gG)" stroke="#9a9a9a" stroke-width=".7"/><circle cx="12" cy="6" r="4.600" fill="#ececec" stroke="#b0b0b0" stroke-width="1.300"/><path d="M15.500 9.500l3.500 3.500" stroke="#a8a8a8" stroke-width="2.400" stroke-linecap="round"/></svg><svg style="left:631px;top:124px" width="24" height="24" viewBox="0 0 24 24"><path d="M1.500 6.500l11-4.500l10 3v12l-10 5l-11-4z" fill="#c0c0c0" stroke="#9e9e9e" stroke-width=".8"/><path d="M1.500 6.500l11 3.500l10-5M12.500 10v12" fill="none" stroke="#a8a8a8" stroke-width=".8"/><path d="M3.500 10.500l6-5v3c6 0 9.500 2.500 9.500 6.500c0 2.500-1.500 4.500-4 6l-2-2.500c1.500-1 2.500-2 2.500-3.500c0-2-2-3-6-3v3.500z" fill="#8c8c8c" stroke="#7a7a7a" stroke-width=".6"/></svg><svg style="left:662px;top:124px" width="24" height="24" viewBox="0 0 24 24"><path d="M3 2l15.500 2.500l3.500 3v12l-3.500 3l-15.500-3z" fill="#b4b4b4" stroke="#989898" stroke-width=".8"/><path d="M6 5.500l10.500 1.500v13l-10.500-2z" fill="#9a9a9a" stroke="#888" stroke-width=".8"/><path d="M9 9l5 .7v7.300l-5-1z" fill="#c4c4c4" stroke="#888" stroke-width=".7"/><path d="M18.500 4.500v18" stroke="#989898" stroke-width=".8"/></svg><svg style="left:693px;top:124px" width="24" height="24" viewBox="0 0 24 24"><path d="M7 3l6-1.500l5 1.500v17l-5 2.500l-6-2.500z" fill="#b0b0b0" stroke="#8e8e8e" stroke-width=".8"/><path d="M7 3l6 2l5-2M13 5v17.500" fill="none" stroke="#8e8e8e" stroke-width=".8"/><path d="M1 8.500l11.500-3l10.500 2.500l-11 3.500z" fill="#c8c8c8" stroke="#8a8a8a" stroke-width=".8"/><path d="M1 15l11.500-3l10.500 2.500l-11 3.500z" fill="#c8c8c8" stroke="#8a8a8a" stroke-width=".8"/><path d="M7.500 8.500l5.500 1.500l5-2v3.500M7.500 15l5.500 1.500l5-2" fill="none" stroke="#9c9c9c" stroke-width=".7"/></svg><svg style="left:736px;top:124px" width="24" height="24" viewBox="0 0 24 24"><path d="M1 4.500l10-2.500l12 2v14.500l-10.500 3.500l-11.500-3.500z" fill="url(#gY)" stroke="#5c5208" stroke-width="1" stroke-linejoin="round"/><path d="M1 4.500l11.500 2.500l10.500-3l-12-2z" fill="#f4ea48" stroke="#5c5208" stroke-width=".8" stroke-linejoin="round"/><path d="M12.500 7v15" stroke="#5c5208" stroke-width=".9"/><path d="M12.700 7.200l10-2.900v14l-10 3.400z" fill="#d6bc10"/></svg><svg style="left:766.5px;top:124px" width="24" height="24" viewBox="0 0 24 24"><path d="M2.500 4.500v15.500c0 4 19 4 19 0v-15.500z" fill="url(#gY2)" stroke="#5c5208" stroke-width="1"/><ellipse cx="12" cy="4.500" rx="9.500" ry="3.300" fill="#f0e440" stroke="#5c5208" stroke-width="1"/></svg><svg style="left:798px;top:124px" width="24" height="24" viewBox="0 0 24 24"><circle cx="12" cy="11.800" r="11" fill="url(#gYs)" stroke="#5c5208" stroke-width="1"/></svg><svg style="left:829px;top:124px" width="24" height="24" viewBox="0 0 24 24"><path d="M12.200 1.500l8 19.500c-2 2.500-14 2.500-16 0z" fill="url(#gY2)" stroke="#5c5208" stroke-width="1" stroke-linejoin="round"/></svg><svg style="left:860px;top:124px" width="24" height="24" viewBox="0 0 24 24"><ellipse cx="12" cy="13" rx="11" ry="8.300" fill="url(#gYs)" stroke="#5c5208" stroke-width="1"/><ellipse cx="12" cy="12.500" rx="5.500" ry="2.800" fill="#f0f0f0" stroke="#5c5208" stroke-width="1"/><path d="M1.500 14c2 6 19 6 21 0" fill="none" stroke="#b89808" stroke-width="1.500" opacity=".6"/></svg><svg style="left:891px;top:124px" width="24" height="24" viewBox="0 0 24 24"><path d="M5 1.500l3.500 8.500h-7z" fill="#e8d41c" stroke="#7a6c0c" stroke-width=".7"/><path d="M9.500 5.500h13" stroke="#8a8a8a" stroke-width="2.600" stroke-linecap="round"/><path d="M9.500 5.500h13" stroke="#d8d8d8" stroke-width="1" stroke-linecap="round"/><path d="M10 10.500l6-2l6 2v8l-6 2l-6-2z" fill="#e8d41c" stroke="#7a6c0c" stroke-width=".7"/><path d="M10 10.500l6 2l6-2" fill="none" stroke="#7a6c0c" stroke-width=".6"/><circle cx="6.500" cy="17.500" r="5.200" fill="none" stroke="#7c7c7c" stroke-width="1.700"/><circle cx="6.500" cy="17.500" r="3" fill="none" stroke="#8c8c8c" stroke-width="1.300"/><circle cx="6.500" cy="17.500" r="1" fill="#8c8c8c"/><circle cx="17.500" cy="18" r="5.200" fill="#dcc418" stroke="#7c7c7c" stroke-width="1.700"/><circle cx="17.500" cy="18" r="3.400" fill="#e8d41c" stroke="#9a8a10" stroke-width=".8"/></svg><svg style="left:922px;top:124px" width="24" height="24" viewBox="0 0 24 24"><path d="M2 15.500l6-2.500l6.500 2v6.500l-6 2.500l-6.500-2.500z" fill="#e8d41c" stroke="#5c5208" stroke-width=".9"/><path d="M2 15.500l6.500 2l6-2.500M8.500 17.500v6.500" fill="none" stroke="#5c5208" stroke-width=".8"/><path d="M2 15.500l6-2.500l6.500 2l-6 2.500z" fill="#f4ec58"/><path d="M14 1.500h10.500" stroke="#8a8a8a" stroke-width="2"/><rect x="17.500" y="10" width="6" height="6" fill="#e8e8e8" stroke="#8a8a8a" stroke-width="1.500"/><rect x="19.300" y="11.800" width="2.400" height="2.400" fill="#bbb"/><path d="M4 4l3 2.500l-3 2.500l-2.500-2.500z" fill="#e8e8e8" stroke="#8a8a8a" stroke-width=".9"/><path d="M9 2.500l4 .5l-1 4z" fill="#e01c1c"/><path d="M7 6l4-2" stroke="#e01c1c" stroke-width="2"/><path d="M17 5.500h6.500l-3.200 3.800z" fill="#e01c1c"/><path d="M20.200 2.500v4" stroke="#e01c1c" stroke-width="2.200"/><path d="M15.500 20l4.500-1.500l-.5 4z" fill="#e01c1c"/><path d="M17.500 21l4-3.500" stroke="#e01c1c" stroke-width="2"/></svg><svg style="left:965px;top:124px" width="24" height="24" viewBox="0 0 24 24"><path d="M15 18.500l8 2.500l-.5 2l-8-2.500z" fill="#e4cc20" stroke="#6e6410" stroke-width=".7"/><path d="M1.500 3.500l11-2.500l5.500 3.500v14l-5.500 3l-11-5z" fill="#c8ccc8" stroke="#6c706c" stroke-width=".9" stroke-linejoin="round"/><path d="M12.500 6.500l5.500-2v14l-5.500 3z" fill="#a4a8a4" stroke="#6c706c" stroke-width=".7"/><path d="M14.500 9.500c1.500-1 2-.5 2 1v5c0 1.500-.5 2.500-2 3z" fill="#e4cc20" stroke="#6e6410" stroke-width=".6"/><path d="M1.500 3.500l11 3l5.500-2" fill="none" stroke="#6c706c" stroke-width=".7"/><circle cx="7" cy="12" r="4.700" fill="#4c4c4c" stroke="#3a3a3a" stroke-width=".6"/><path d="M2.300 12a4.700 4.700 0 0 1 9.400 0z" fill="#f0dc10" stroke="#5c5208" stroke-width=".6"/></svg><svg style="left:996px;top:124px" width="24" height="24" viewBox="0 0 24 24"><path d="M15 18.500l8 2.500l-.5 2l-8-2.500z" fill="#e4cc20" stroke="#6e6410" stroke-width=".7"/><path d="M1.500 3.500l11-2.500l5.500 3.500v14l-5.500 3l-11-5z" fill="#c8ccc8" stroke="#6c706c" stroke-width=".9" stroke-linejoin="round"/><path d="M12.500 6.500l5.500-2v14l-5.500 3z" fill="#a4a8a4" stroke="#6c706c" stroke-width=".7"/><path d="M14.500 9.500c1.500-1 2-.5 2 1v5c0 1.500-.5 2.500-2 3z" fill="#e4cc20" stroke="#6e6410" stroke-width=".6"/><path d="M1.500 3.500l11 3l5.500-2" fill="none" stroke="#6c706c" stroke-width=".7"/><circle cx="7" cy="12" r="4.700" fill="#4c4c4c" stroke="#3a3a3a" stroke-width=".6"/><path d="M2.300 12a4.700 4.700 0 0 1 9.400 0z" fill="#f0dc10" stroke="#5c5208" stroke-width=".6"/><path d="M6 2.500c5-2.500 10-1.500 12.500 3.500" fill="none" stroke="#1c3768" stroke-width="3.200"/><path d="M6 2.500c5-2.500 10-1.500 12.500 3.500" fill="none" stroke="#3c78cc" stroke-width="1.800"/><path d="M19.500 8.500l-3.500-3l4-1.500z" fill="#2c5aa6"/><path d="M1.500 3l5 18.500l15.500-9.500" fill="none" stroke="#7c0c0c" stroke-width="2.800" stroke-linejoin="round"/><path d="M1.500 3l5 18.500l15.500-9.500" fill="none" stroke="#e01c1c" stroke-width="1.500" stroke-linejoin="round"/></svg><svg style="left:1032.5px;top:124px" width="24" height="24" viewBox="0 0 24 24"><path d="M15 18.500l8 2.500l-.5 2l-8-2.500z" fill="#e4cc20" stroke="#6e6410" stroke-width=".7"/><path d="M1.500 3.500l11-2.500l5.500 3.500v14l-5.500 3l-11-5z" fill="#c8ccc8" stroke="#6c706c" stroke-width=".9" stroke-linejoin="round"/><path d="M12.500 6.500l5.500-2v14l-5.500 3z" fill="#a4a8a4" stroke="#6c706c" stroke-width=".7"/><path d="M14.500 9.500c1.500-1 2-.5 2 1v5c0 1.500-.5 2.500-2 3z" fill="#e4cc20" stroke="#6e6410" stroke-width=".6"/><path d="M1.500 3.500l11 3l5.500-2" fill="none" stroke="#6c706c" stroke-width=".7"/><circle cx="7" cy="12" r="4.700" fill="#4c4c4c" stroke="#3a3a3a" stroke-width=".6"/><path d="M2.300 12a4.700 4.700 0 0 1 9.400 0z" fill="#f0dc10" stroke="#5c5208" stroke-width=".6"/><path d="M2.500 12.500l9 9M11.500 12.500l-9 9" stroke="#7c0c0c" stroke-width="3.600" stroke-linecap="round"/><path d="M2.500 12.500l9 9M11.500 12.500l-9 9" stroke="#e01c1c" stroke-width="2.200" stroke-linecap="round"/></svg><svg style="left:1064px;top:124px" width="24" height="24" viewBox="0 0 24 24"><path d="M15 18.500l8 2.500l-.5 2l-8-2.500z" fill="#e4cc20" stroke="#6e6410" stroke-width=".7"/><path d="M1.500 3.500l11-2.500l5.500 3.500v14l-5.500 3l-11-5z" fill="#c8ccc8" stroke="#6c706c" stroke-width=".9" stroke-linejoin="round"/><path d="M12.500 6.500l5.500-2v14l-5.500 3z" fill="#a4a8a4" stroke="#6c706c" stroke-width=".7"/><path d="M14.500 9.500c1.500-1 2-.5 2 1v5c0 1.500-.5 2.500-2 3z" fill="#e4cc20" stroke="#6e6410" stroke-width=".6"/><path d="M1.500 3.500l11 3l5.500-2" fill="none" stroke="#6c706c" stroke-width=".7"/><circle cx="7" cy="12" r="4.700" fill="#4c4c4c" stroke="#3a3a3a" stroke-width=".6"/><path d="M2.300 12a4.700 4.700 0 0 1 9.400 0z" fill="#f0dc10" stroke="#5c5208" stroke-width=".6"/><path d="M2 22.500v-20h20.500v20" fill="none" stroke="#2c7a10" stroke-width="3.200"/><path d="M2 22.500v-20h20.500v20" fill="none" stroke="#6cd82c" stroke-width="1.800"/><path d="M2.500 11l10-9.500l10 10l-10 11" fill="none" stroke="#7c0c0c" stroke-width="3" stroke-linejoin="round"/><path d="M2.500 11l10-9.500l10 10l-10 11" fill="none" stroke="#e01c1c" stroke-width="1.700" stroke-linejoin="round"/></svg><svg style="left:1095px;top:124px" width="24" height="24" viewBox="0 0 24 24"><path d="M15 18.500l8 2.500l-.5 2l-8-2.500z" fill="#e4cc20" stroke="#6e6410" stroke-width=".7"/><path d="M1.500 3.500l11-2.500l5.500 3.500v14l-5.500 3l-11-5z" fill="#c8ccc8" stroke="#6c706c" stroke-width=".9" stroke-linejoin="round"/><path d="M12.500 6.500l5.500-2v14l-5.500 3z" fill="#a4a8a4" stroke="#6c706c" stroke-width=".7"/><path d="M14.500 9.500c1.500-1 2-.5 2 1v5c0 1.500-.5 2.500-2 3z" fill="#e4cc20" stroke="#6e6410" stroke-width=".6"/><path d="M1.500 3.500l11 3l5.500-2" fill="none" stroke="#6c706c" stroke-width=".7"/><circle cx="7" cy="12" r="4.700" fill="#4c4c4c" stroke="#3a3a3a" stroke-width=".6"/><path d="M2.300 12a4.700 4.700 0 0 1 9.400 0z" fill="#f0dc10" stroke="#5c5208" stroke-width=".6"/><path d="M2.500 11l10-9.500l10 10l-10 11" fill="none" stroke="#7c0c0c" stroke-width="3" stroke-linejoin="round"/><path d="M2.500 11l10-9.500l10 10l-10 11" fill="none" stroke="#e01c1c" stroke-width="1.700" stroke-linejoin="round"/></svg><svg style="left:1126px;top:124px" width="24" height="24" viewBox="0 0 24 24"><path d="M15 18.500l8 2.500l-.5 2l-8-2.500z" fill="#e4cc20" stroke="#6e6410" stroke-width=".7"/><path d="M1.500 3.500l11-2.500l5.500 3.500v14l-5.500 3l-11-5z" fill="#c8ccc8" stroke="#6c706c" stroke-width=".9" stroke-linejoin="round"/><path d="M12.500 6.500l5.500-2v14l-5.500 3z" fill="#a4a8a4" stroke="#6c706c" stroke-width=".7"/><path d="M14.500 9.500c1.500-1 2-.5 2 1v5c0 1.500-.5 2.500-2 3z" fill="#e4cc20" stroke="#6e6410" stroke-width=".6"/><path d="M1.500 3.500l11 3l5.500-2" fill="none" stroke="#6c706c" stroke-width=".7"/><circle cx="7" cy="12" r="4.700" fill="#4c4c4c" stroke="#3a3a3a" stroke-width=".6"/><path d="M2.300 12a4.700 4.700 0 0 1 9.400 0z" fill="#f0dc10" stroke="#5c5208" stroke-width=".6"/><path d="M2 22.500v-20h20.500v20" fill="none" stroke="#2c7a10" stroke-width="3.200"/><path d="M2 22.500v-20h20.500v20" fill="none" stroke="#6cd82c" stroke-width="1.800"/></svg><div class="sep" style="left:137px;top:56px"></div><div class="sep" style="left:236px;top:56px"></div><div class="sep" style="left:327px;top:56px"></div><div class="sep" style="left:365px;top:56px"></div><div class="sep" style="left:117px;top:90px"></div><div class="sep" style="left:154px;top:90px"></div><div class="sep" style="left:253px;top:90px"></div><div class="sep" style="left:352px;top:90px"></div><div class="sep" style="left:1027px;top:124px"></div><div class="vl" style="left:400px;top:52px;height:33px;background:#a4a4a4"></div><div class="vl" style="left:401px;top:52px;height:33px;background:#fff"></div><div class="vl" style="left:557px;top:52px;height:33px;background:#a4a4a4"></div><div class="vl" style="left:558px;top:52px;height:33px;background:#fff"></div><div class="vl" style="left:388px;top:86px;height:33px;background:#a4a4a4"></div><div class="vl" style="left:389px;top:86px;height:33px;background:#fff"></div><div class="vl" style="left:333px;top:120px;height:33px;background:#a4a4a4"></div><div class="vl" style="left:334px;top:120px;height:33px;background:#fff"></div><div class="vl" style="left:722px;top:120px;height:33px;background:#a4a4a4"></div><div class="vl" style="left:723px;top:120px;height:33px;background:#fff"></div><div class="vl" style="left:951px;top:120px;height:33px;background:#a4a4a4"></div><div class="vl" style="left:952px;top:120px;height:33px;background:#fff"></div><div class="grip" style="left:4px;top:55px;height:27px"></div><div class="grip" style="left:405px;top:55px;height:27px"></div><div class="grip" style="left:562px;top:55px;height:27px"></div><div class="grip" style="left:4px;top:89px;height:27px"></div><div class="grip" style="left:393px;top:89px;height:27px"></div><div class="grip" style="left:4px;top:123px;height:27px"></div><div class="grip" style="left:338px;top:123px;height:27px"></div><div class="grip" style="left:727px;top:123px;height:27px"></div><div class="grip" style="left:956px;top:123px;height:27px"></div><div class="dd ddg" style="left:271.9px;top:66px"></div><div class="dd ddg" style="left:314.7px;top:66px"></div><div class="dd " style="left:104.8px;top:100px"></div><div class="dd ddg" style="left:290.8px;top:134px"></div><div class="dd " style="left:376.8px;top:134px"></div><div class="dd " style="left:543.8px;top:134px"></div><div class="dd " style="left:587px;top:134px"></div><div class="a" style="left:411px;top:57px;width:145px;height:22px;background:#e4e4e4;border:1px solid #adadad"></div><svg style="left:416px;top:61px" width="16" height="16" viewBox="0 0 16 16"><path d="M1 4l6.500-2l7.500 2v8.500l-7 2.500l-7-2.500z" fill="url(#gB)" stroke="#1c3768" stroke-width=".8" stroke-linejoin="round"/><path d="M1 4l7 2l7-2l-7.500-2z" fill="#7aa8e0" stroke="#1c3768" stroke-width=".6"/><path d="M8 6v9" stroke="#1c3768" stroke-width=".7"/></svg><div class="t" style="left:434px;top:62px;font-size:12px;letter-spacing:-0.2px">Part</div><div class="dd" style="left:543px;top:66px"></div><div class="a" style="left:0;top:154px;width:268px;height:19px;background:#dadada;border:1px solid #b4b4b4"></div><div class="t" style="left:1px;top:159px;font-size:11px;letter-spacing:-0.45px">Combo View</div><svg style="left:238px;top:158px" width="30" height="12"><path d="M3.5 2.5h5v4M1.5 4.5h5v5h-5zM1.5 5.5h5M18.500 2.500l6 6M24.500 2.500l-6 6" fill="none" stroke="#111" stroke-width="1.4"/></svg><div class="a" style="left:0;top:175px;width:54px;height:23px;background:#fff;border:1px solid #dcdcdc;border-bottom:none"></div><div class="a" style="left:53px;top:177px;width:47px;height:19px;background:#f0f0f0;border:1px solid #d4d4d4;border-bottom:none"></div><div class="t" style="left:11px;top:181px;font-size:11px">Model</div><div class="t" style="left:63px;top:182px;font-size:11px">Tasks</div><div class="a" style="left:2px;top:197px;width:263px;height:258px;background:#fff;border:1px solid #828790"></div><div class="vl" style="left:180px;top:198px;height:23px;background:#e0e0e0"></div><div class="t" style="left:7px;top:204px;font-size:12px;letter-spacing:0.05px">Labels &amp; Attributes</div><div class="t" style="left:6px;top:224px;font-size:12.5px;letter-spacing:-0.05px">Application</div><svg style="left:7px;top:242.5px" width="12" height="10"><path d="M1.5 2.500l4 4l4-4" fill="none" stroke="#333" stroke-width="1.4"/></svg><svg style="left:27px;top:240px" width="14" height="15" viewBox="0 0 17 18"><rect x=".5" y=".5" width="16" height="17" rx="1.500" fill="#f4f4f4" stroke="#9a9a9a" stroke-width=".8"/><path d="M3 6.500l4.500-1.500l4.500 1.500v6l-4.500 2.500l-4.500-2.500z" fill="#3868b4" stroke="#1c3768" stroke-width=".7"/><path d="M3 6.500l4.500 1.500l4.500-1.500M7.500 8v7" fill="none" stroke="#1c3768" stroke-width=".6"/><circle cx="12" cy="5" r="3.200" fill="#e01c1c" stroke="#8a0c0c" stroke-width=".6"/></svg><svg style="left:46px;top:257px" width="16" height="16" viewBox="0 0 16 16"><path d="M1 4l6.500-2l7.500 2v8.500l-7 2.500l-7-2.500z" fill="url(#gB)" stroke="#1c3768" stroke-width=".8" stroke-linejoin="round"/><path d="M1 4l7 2l7-2l-7.500-2z" fill="#7aa8e0" stroke="#1c3768" stroke-width=".6"/><path d="M8 6v9" stroke="#1c3768" stroke-width=".7"/></svg><div class="t" style="left:48px;top:242px;font-size:12px;font-weight:bold;letter-spacing:-0.2px">Unnamed2</div><div class="t" style="left:68px;top:260px;font-size:12px;letter-spacing:-0.2px">Guiding_slots_sketch</div><div class="a" style="left:2px;top:460px;width:263px;height:272px;background:#fff;border:1px solid #c8c8c8"></div><div class="a" style="left:4px;top:462px;width:257px;height:269px;background:#fff;border:1px solid #828790"></div><div class="vl" style="left:104px;top:465px;height:22px;background:#e0e0e0"></div><div class="vl" style="left:258px;top:465px;height:22px;background:#e0e0e0"></div><div class="t" style="left:9px;top:469px;font-size:12px;letter-spacing:0px">Property</div><div class="t" style="left:109px;top:469px;font-size:12px;letter-spacing:-0.1px">Value</div><svg style="left:0;top:731px" width="110" height="20"><path d="M3 1.500c2 0 1 12 6 12h30c5 0 4-12 7-12c3 0 2 14 7 14h32c5 0 4-14 7-14" fill="none" stroke="#222" stroke-width="1"/></svg><div class="t" style="left:14px;top:734px;font-size:11px">View</div><div class="t" style="left:59px;top:735px;font-size:11px">Data</div><div class="a" style="left:272px;top:153px;width:1107px;height:574px;background:linear-gradient(#323263,#9797ad);overflow:hidden"><svg style="left:0;top:0" width="1107" height="574" viewBox="273 154 1107 574"><defs><linearGradient id="cg" gradientUnits="userSpaceOnUse" x1="932.7" y1="497.3" x2="1000.6" y2="509.4"><stop offset="0" stop-color="#6a6a6a"/><stop offset="0.1" stop-color="#8e8e8e"/><stop offset="0.3" stop-color="#aaaaaa"/><stop offset="0.5" stop-color="#b4b4b4"/><stop offset="0.7" stop-color="#ababab"/><stop offset="0.83" stop-color="#9e9e9e"/><stop offset="0.832" stop-color="#8e8e8e"/><stop offset="0.92" stop-color="#7a7a7a"/><stop offset="1" stop-color="#5c5c5c"/></linearGradient><linearGradient id="bg2" gradientUnits="userSpaceOnUse" x1="775" y1="585" x2="790.5" y2="587.8"><stop offset="0" stop-color="#8a8a8a"/><stop offset="0.25" stop-color="#a4a4a4"/><stop offset="0.55" stop-color="#8c8c8c"/><stop offset="1" stop-color="#4e4e4e"/></linearGradient></defs><polygon points="418.9,268.1 431.0,264.2 504.7,335.0 843.3,241.0 848.5,209.4 880.4,200.4 890.4,148.0 920.1,148.0 1235.8,448.8 1210.2,592.1 725.1,726.9 393.3,411.5" fill="#7f7f7f"/><polygon points="418.9,268.1 393.3,411.5 725.1,726.9 750.4,583.1" fill="#797979"/><polygon points="725.1,726.9 739.4,646.2 751.9,643.1 783.0,634.8 777.9,667.1 820.8,655.2 818.8,670.2 1140.0,581.0 1143.1,565.4 1174.8,556.5 1180.4,524.4 1212.3,515.4 1223.8,451.8 1235.8,448.8 1210.2,592.1" fill="#8b8b8b"/><polygon points="750.4,583.1 762.5,580.0 751.9,643.1 739.4,646.2" fill="#8b8b8b"/><polygon points="745.2,563.5 781.7,554.2 768.8,618.1 756.2,620.8 762.5,580.0" fill="#8b8b8b"/><polygon points="530.8,358.3 820.4,278.0 815.8,301.7 549.6,375.6" fill="#8a8a8a"/><polygon points="647.7,440.0 862.8,380.5 859.5,396.4 660.0,451.5" fill="#8a8a8a"/><polygon points="1030.0,511.2 1073.8,499.4 1071.0,515.4 1027.5,527.5" fill="#8a8a8a"/><polygon points="880.4,200.4 1212.3,515.4 1223.8,451.8 902.6,148.0 890.4,148.0" fill="#797979"/><polygon points="843.3,241.0 848.5,209.4 1180.4,524.4 1174.8,556.5" fill="#777777"/><polygon points="820.4,278.0 903.4,356.6 879.8,362.8 815.8,301.7" fill="#777777"/><polygon points="875.7,363.9 1030.0,511.2 1027.5,527.5 1030.0,530.0 1007.0,536.2 859.5,396.4 862.8,380.5 871.3,388.0" fill="#777777"/><polygon points="1073.8,499.4 1143.1,565.4 1140.0,581.0 1071.0,515.4" fill="#777777"/><polygon points="783.0,634.8 777.9,667.1 820.8,655.2 781.8,617.5" fill="#7d7d7d"/><polyline points="418.9,268.1 431.0,264.2" fill="none" stroke="#0a0a0a" stroke-width="1.55" stroke-linejoin="round" stroke-linecap="round"/><polyline points="393.3,411.5 418.9,268.1" fill="none" stroke="#0a0a0a" stroke-width="1.55" stroke-linejoin="round" stroke-linecap="round"/><polyline points="393.3,411.5 725.1,726.9" fill="none" stroke="#0a0a0a" stroke-width="1.55" stroke-linejoin="round" stroke-linecap="round"/><polyline points="418.9,268.1 750.4,583.1" fill="none" stroke="#0a0a0a" stroke-width="1.55" stroke-linejoin="round" stroke-linecap="round"/><polyline points="431.0,264.2 706.7,526.9" fill="none" stroke="#0a0a0a" stroke-width="1.55" stroke-linejoin="round" stroke-linecap="round"/><polyline points="745.2,563.5 762.5,580.0" fill="none" stroke="#0a0a0a" stroke-width="1.55" stroke-linejoin="round" stroke-linecap="round"/><polyline points="762.5,580.0 750.4,583.1" fill="none" stroke="#0a0a0a" stroke-width="1.55" stroke-linejoin="round" stroke-linecap="round"/><polyline points="750.4,583.1 739.4,646.2 725.1,726.9" fill="none" stroke="#0a0a0a" stroke-width="1.55" stroke-linejoin="round" stroke-linecap="round"/><polyline points="407.7,331.7 739.4,646.2" fill="none" stroke="#0a0a0a" stroke-width="1.55" stroke-linejoin="round" stroke-linecap="round"/><polyline points="739.4,646.2 751.9,643.1 783.0,634.8" fill="none" stroke="#0a0a0a" stroke-width="1.55" stroke-linejoin="round" stroke-linecap="round"/><polyline points="762.5,580.0 751.9,643.1" fill="none" stroke="#0a0a0a" stroke-width="1.55" stroke-linejoin="round" stroke-linecap="round"/><polyline points="756.2,620.8 768.8,618.1" fill="none" stroke="#0a0a0a" stroke-width="1.55" stroke-linejoin="round" stroke-linecap="round"/><polyline points="768.8,618.1 783.0,634.8" fill="none" stroke="#0a0a0a" stroke-width="1.55" stroke-linejoin="round" stroke-linecap="round"/><polyline points="783.0,634.8 777.9,667.1" fill="none" stroke="#0a0a0a" stroke-width="1.55" stroke-linejoin="round" stroke-linecap="round"/><polyline points="777.9,667.1 820.8,655.2" fill="none" stroke="#0a0a0a" stroke-width="1.55" stroke-linejoin="round" stroke-linecap="round"/><polyline points="820.8,655.2 818.8,670.2" fill="none" stroke="#0a0a0a" stroke-width="1.55" stroke-linejoin="round" stroke-linecap="round"/><polyline points="818.8,670.2 1140.0,581.0" fill="none" stroke="#0a0a0a" stroke-width="1.55" stroke-linejoin="round" stroke-linecap="round"/><polyline points="1140.0,581.0 1143.1,565.4 1174.8,556.5 1180.4,524.4 1212.3,515.4 1224.2,512.9" fill="none" stroke="#0a0a0a" stroke-width="1.55" stroke-linejoin="round" stroke-linecap="round"/><polyline points="1223.8,451.8 1212.3,515.4" fill="none" stroke="#0a0a0a" stroke-width="1.55" stroke-linejoin="round" stroke-linecap="round"/><polyline points="1235.8,448.8 1223.8,451.8" fill="none" stroke="#0a0a0a" stroke-width="1.55" stroke-linejoin="round" stroke-linecap="round"/><polyline points="1235.8,448.8 1210.2,592.1" fill="none" stroke="#0a0a0a" stroke-width="1.55" stroke-linejoin="round" stroke-linecap="round"/><polyline points="1210.2,592.1 725.1,726.9" fill="none" stroke="#0a0a0a" stroke-width="1.55" stroke-linejoin="round" stroke-linecap="round"/><polyline points="1223.8,451.8 902.6,148.0" fill="none" stroke="#0a0a0a" stroke-width="1.55" stroke-linejoin="round" stroke-linecap="round"/><polyline points="1235.8,448.8 920.1,148.0" fill="none" stroke="#0a0a0a" stroke-width="1.55" stroke-linejoin="round" stroke-linecap="round"/><polyline points="880.4,200.4 1212.3,515.4" fill="none" stroke="#0a0a0a" stroke-width="1.55" stroke-linejoin="round" stroke-linecap="round"/><polyline points="848.5,209.4 1180.4,524.4" fill="none" stroke="#0a0a0a" stroke-width="1.55" stroke-linejoin="round" stroke-linecap="round"/><polyline points="843.3,241.0 1174.8,556.5" fill="none" stroke="#0a0a0a" stroke-width="1.55" stroke-linejoin="round" stroke-linecap="round"/><polyline points="431.0,264.2 504.7,335.0" fill="none" stroke="#0a0a0a" stroke-width="1.55" stroke-linejoin="round" stroke-linecap="round"/><polyline points="504.7,335.0 843.3,241.0 848.5,209.4 880.4,200.4 890.4,148.0" fill="none" stroke="#0a0a0a" stroke-width="1.55" stroke-linejoin="round" stroke-linecap="round"/><polyline points="530.8,358.3 820.4,278.0" fill="none" stroke="#0a0a0a" stroke-width="1.55" stroke-linejoin="round" stroke-linecap="round"/><polyline points="549.6,375.6 815.8,301.7" fill="none" stroke="#0a0a0a" stroke-width="1.55" stroke-linejoin="round" stroke-linecap="round"/><polyline points="820.4,278.0 815.8,301.7" fill="none" stroke="#0a0a0a" stroke-width="1.55" stroke-linejoin="round" stroke-linecap="round"/><polyline points="820.4,278.0 903.4,356.6" fill="none" stroke="#0a0a0a" stroke-width="1.55" stroke-linejoin="round" stroke-linecap="round"/><polyline points="815.8,301.7 879.8,362.8" fill="none" stroke="#0a0a0a" stroke-width="1.55" stroke-linejoin="round" stroke-linecap="round"/><polyline points="903.4,356.6 875.7,363.9 871.3,388.0 862.8,380.5 859.5,396.4" fill="none" stroke="#0a0a0a" stroke-width="1.55" stroke-linejoin="round" stroke-linecap="round"/><polyline points="647.7,440.0 862.8,380.5" fill="none" stroke="#0a0a0a" stroke-width="1.55" stroke-linejoin="round" stroke-linecap="round"/><polyline points="660.0,451.5 859.5,396.4" fill="none" stroke="#0a0a0a" stroke-width="1.55" stroke-linejoin="round" stroke-linecap="round"/><polyline points="875.7,363.9 1030.0,511.2" fill="none" stroke="#0a0a0a" stroke-width="1.55" stroke-linejoin="round" stroke-linecap="round"/><polyline points="859.5,396.4 1007.0,536.2" fill="none" stroke="#0a0a0a" stroke-width="1.55" stroke-linejoin="round" stroke-linecap="round"/><polyline points="792.1,596.2 1030.0,530.0" fill="none" stroke="#0a0a0a" stroke-width="1.55" stroke-linejoin="round" stroke-linecap="round"/><polyline points="1030.0,511.2 1027.5,527.5 1030.0,530.0" fill="none" stroke="#0a0a0a" stroke-width="1.55" stroke-linejoin="round" stroke-linecap="round"/><polyline points="1030.0,511.2 1073.8,499.4" fill="none" stroke="#0a0a0a" stroke-width="1.55" stroke-linejoin="round" stroke-linecap="round"/><polyline points="1027.5,527.5 1071.0,515.4" fill="none" stroke="#0a0a0a" stroke-width="1.55" stroke-linejoin="round" stroke-linecap="round"/><polyline points="1073.8,499.4 1071.0,515.4" fill="none" stroke="#0a0a0a" stroke-width="1.55" stroke-linejoin="round" stroke-linecap="round"/><polyline points="1073.8,499.4 1143.1,565.4" fill="none" stroke="#0a0a0a" stroke-width="1.55" stroke-linejoin="round" stroke-linecap="round"/><polyline points="1071.0,515.4 1140.0,581.0" fill="none" stroke="#0a0a0a" stroke-width="1.55" stroke-linejoin="round" stroke-linecap="round"/><polyline points="613.4,437.3 637.0,430.7" fill="none" stroke="#0a0a0a" stroke-width="1.55" stroke-linejoin="round" stroke-linecap="round"/><polyline points="637.0,430.7 732.0,521.6" fill="none" stroke="#0a0a0a" stroke-width="1.55" stroke-linejoin="round" stroke-linecap="round"/><polyline points="706.7,526.9 732.0,521.6" fill="none" stroke="#0a0a0a" stroke-width="1.55" stroke-linejoin="round" stroke-linecap="round"/><polyline points="781.7,554.2 745.2,563.5" fill="none" stroke="#0a0a0a" stroke-width="1.55" stroke-linejoin="round" stroke-linecap="round"/><polyline points="781.8,617.5 820.8,655.2" fill="none" stroke="#0a0a0a" stroke-width="1.55" stroke-linejoin="round" stroke-linecap="round"/><polyline points="787.9,577.5 791.7,578.5 790.0,593.1 786.2,592.1 787.9,577.5" fill="none" stroke="#0a0a0a" stroke-width="1.55" stroke-linejoin="round" stroke-linecap="round"/><polyline points="790.0,593.1 792.1,596.2" fill="none" stroke="#0a0a0a" stroke-width="1.55" stroke-linejoin="round" stroke-linecap="round"/><polygon points="781.7,554.2 781.8,553.9 783.6,553.4 785.4,552.7 787.1,551.9 788.6,551.1 790.0,550.2 791.3,549.2 792.4,548.1 793.4,547.0 794.2,545.8 794.8,544.6 795.3,543.3 795.7,542.0 779.6,632.1 768.8,618.1" fill="url(#bg2)"/><polyline points="732.0,521.6 733.2,520.5 734.6,519.6 736.1,518.7 737.8,517.9 739.5,517.2 741.4,516.5 743.4,516.0 745.5,515.6 747.7,515.3 749.9,515.0 752.3,514.9 754.6,514.9 757.0,515.0 759.4,515.2 761.9,515.5 764.3,515.9 766.7,516.4 769.1,517.0 771.5,517.7 773.8,518.5 776.1,519.3 778.2,520.3 780.3,521.3 782.3,522.4 784.2,523.5 786.0,524.8 787.7,526.0 789.2,527.4 790.6,528.7 791.8,530.1 792.9,531.6 793.8,533.0 794.5,534.4 795.1,535.9 795.5,537.4 795.8,538.8 795.8,540.2 795.7,541.6 795.4,543.0 795.0,544.3 794.3,545.6 793.5,546.8 792.6,547.9 791.4,549.0 790.2,550.1 788.7,551.0 787.2,551.9 785.5,552.7 783.7,553.3 781.8,553.9" fill="none" stroke="#0a0a0a" stroke-width="1.55" stroke-linejoin="round" stroke-linecap="round"/><polyline points="781.7,554.2 768.8,618.1" fill="none" stroke="#0a0a0a" stroke-width="1.55" stroke-linejoin="round" stroke-linecap="round"/><polyline points="795.7,542.0 784.2,606.0" fill="none" stroke="#0a0a0a" stroke-width="1.55" stroke-linejoin="round" stroke-linecap="round"/><polyline points="770.3,617.9 772.2,617.4 774.0,616.7 775.7,615.9 777.2,615.1 778.6,614.2 779.9,613.2 781.0,612.1 782.0,611.0 782.8,609.8 783.4,608.6 783.9,607.3 784.2,606.0" fill="none" stroke="#0a0a0a" stroke-width="1.55" stroke-linejoin="round" stroke-linecap="round"/><polygon points="932.7,497.3 914.9,597.1 914.8,598.6 914.8,600.2 915.1,601.7 915.5,603.3 916.2,604.9 917.1,606.5 918.1,608.1 919.4,609.6 920.8,611.1 922.4,612.6 924.2,614.0 926.1,615.3 928.1,616.6 930.3,617.8 932.6,618.9 935.0,619.9 937.5,620.9 940.0,621.7 942.6,622.4 945.3,623.0 947.9,623.4 950.6,623.8 953.3,624.0 955.9,624.1 958.5,624.1 961.0,624.0 963.4,623.7 965.8,623.3 968.0,622.8 970.1,622.2 972.1,621.5 974.0,620.6 975.7,619.7 977.2,618.6 978.6,617.5 979.7,616.3 980.7,615.0 981.5,613.6 982.1,612.2 982.4,610.7 1000.3,510.9 1000.3,510.9 999.9,512.4 999.3,513.8 998.5,515.2 997.5,516.5 996.4,517.7 995.0,518.8 993.5,519.9 991.8,520.8 990.0,521.7 988.0,522.4 985.8,523.0 983.6,523.5 981.2,523.9 978.8,524.2 976.3,524.3 973.7,524.3 971.1,524.2 968.4,524.0 965.8,523.6 963.1,523.2 960.5,522.6 957.9,521.9 955.3,521.1 952.8,520.1 950.4,519.1 948.1,518.0 946.0,516.8 943.9,515.5 942.0,514.2 940.2,512.8 938.6,511.3 937.2,509.8 935.9,508.3 934.9,506.7 934.0,505.1 933.3,503.5 932.9,501.9 932.6,500.4 932.6,498.8 932.7,497.3" fill="url(#cg)"/><polygon points="994.0,496.5 995.6,498.2 997.0,499.9 998.2,501.6 999.1,503.4 999.8,505.2 1000.2,506.9 1000.4,508.7 1000.3,510.4 1000.0,512.0 999.4,513.6 998.5,515.1 997.4,516.6 996.1,517.9 994.6,519.2 992.8,520.3 990.8,521.3 988.7,522.1 986.4,522.9 983.9,523.5 981.3,523.9 978.6,524.2 975.8,524.3 972.9,524.3 969.9,524.1 967.0,523.8 964.0,523.4 961.1,522.7 958.2,522.0 955.4,521.1 952.6,520.0 950.0,518.9 947.5,517.6 945.1,516.3 942.9,514.8 940.8,513.3 939.0,511.7 937.4,510.0 936.0,508.3 934.8,506.6 933.9,504.8 933.2,503.0 932.8,501.3 932.6,499.5 932.7,497.8 933.0,496.2 933.6,494.6 934.5,493.1 935.6,491.6 936.9,490.3 938.4,489.0 940.2,487.9 942.2,486.9 944.3,486.1 946.6,485.3 949.1,484.7 951.7,484.3 954.4,484.0 957.2,483.9 960.1,483.9 963.1,484.1 966.0,484.4 969.0,484.8 971.9,485.5 974.8,486.2 977.6,487.1 980.4,488.2 983.0,489.3 985.5,490.6 987.9,491.9 990.1,493.4 992.2,494.9 994.0,496.5" fill="#7f7f7f"  stroke="#0a0a0a" stroke-width="1.55" stroke-linejoin="round" stroke-linecap="round"/><polyline points="932.7,497.3 914.9,597.1 914.8,598.6 914.8,600.2 915.1,601.7 915.5,603.3 916.2,604.9 917.1,606.5 918.1,608.1 919.4,609.6 920.8,611.1 922.4,612.6 924.2,614.0 926.1,615.3 928.1,616.6 930.3,617.8 932.6,618.9 935.0,619.9 937.5,620.9 940.0,621.7 942.6,622.4 945.3,623.0 947.9,623.4 950.6,623.8 953.3,624.0 955.9,624.1 958.5,624.1 961.0,624.0 963.4,623.7 965.8,623.3 968.0,622.8 970.1,622.2 972.1,621.5 974.0,620.6 975.7,619.7 977.2,618.6 978.6,617.5 979.7,616.3 980.7,615.0 981.5,613.6 982.1,612.2 982.4,610.7 1000.3,510.9" fill="none" stroke="#0a0a0a" stroke-width="1.55" stroke-linejoin="round" stroke-linecap="round"/><polyline points="986.4,522.9 968.5,622.7" fill="none" stroke="#0a0a0a" stroke-width="1.55" stroke-linejoin="round" stroke-linecap="round"/></svg><svg style="left:0;top:0" width="1107" height="574" viewBox="273 154 1107 574"><defs><filter id="bl" x="-10%" y="-10%" width="120%" height="120%"><feGaussianBlur stdDeviation="0.7"/></filter><filter id="bl2"><feGaussianBlur stdDeviation="0.45"/></filter></defs><polygon points="1288.2,170.9 1305.4,170.9 1296.8,162.4" fill="#dfe3ec"/><polygon points="1288.2,302.9 1305.4,302.9 1296.8,311.4" fill="#dfe3ec"/><polygon points="1222.2,236.8 1230.9,228.2 1230.9,245.4" fill="#dfe3ec"/><polygon points="1372,236.8 1363.3,228.2 1363.3,245.4" fill="#dfe3ec"/><path d="M1276.3 171.600Q1259 177 1249.500 189.500" fill="none" stroke="#dfe3ec" stroke-width="5.2"/><polygon points="1242.8,194.6 1243.8,184.2 1254.6,192.6" fill="#dfe3ec"/><path d="M1317.9 171.600Q1335 177 1344.700 189.500" fill="none" stroke="#dfe3ec" stroke-width="5.2"/><polygon points="1351.2,194.6 1350.4,184.2 1340.4,192.600" fill="#dfe3ec"/><path d="M1256.2 199.300V250" stroke="#1c1ce0" stroke-width="1.500"/><path d="M1256.2 250L1284.600 291.500" stroke="#d0102c" stroke-width="1.500"/><g filter="url(#bl)"><path d="M1264 207.500Q1285 199 1302 197Q1309 196.500 1316 200L1336 211Q1342 216 1343 226Q1344 236 1341 243L1332 262Q1329 268 1322 271L1298 282.500Q1292 285 1287 281L1273 269Q1266 262 1260 251Q1257 246 1257 238V218Q1257.500 211 1264 207.500Z" fill="#f5f6fa"/><path d="M1262 209L1270 204.500L1297 229L1290 238Z" fill="#dfe4ee"/><path d="M1302 230L1340 219L1343 231L1304 240Z" fill="#dfe4ee"/><path d="M1286 240L1297 243L1292 283L1281 276Z" fill="#dfe4ee"/><circle cx="1291" cy="233" r="8.500" fill="#f6f7fa"/><circle cx="1298.500" cy="238" r="5.500" fill="#fafbfd"/></g><path d="M1257.500 249.300L1292.800 239.200" stroke="#9be89b" stroke-width="0.8" opacity="0.9"/><path d="M1301 228L1303 214M1302 240L1322 258" stroke="#8e90a8" stroke-width="1" opacity="0.7"/><text x="0" y="0" font-size="11" font-family="Liberation Sans,sans-serif" font-style="italic" fill="#4a4a4a" filter="url(#bl2)" transform="translate(1293.500,203.500) rotate(32) skewX(-20) scale(1,0.75)">Top</text><text x="0" y="0" font-size="8.5" font-family="Liberation Sans,sans-serif" font-style="italic" fill="#4a4a4a" filter="url(#bl2)" transform="translate(1261.500,232) rotate(62) skewX(8) scale(1,1.1)">Front</text><text x="0" y="0" font-size="11.5" font-family="Liberation Sans,sans-serif" font-style="italic" fill="#4a4a4a" filter="url(#bl2)" transform="translate(1302,265) rotate(-24) skewX(-8)">Right</text><text x="1253.500" y="196" font-size="9" font-family="Liberation Sans,sans-serif" fill="#1c1ce0">Z</text><text x="1283.500" y="298" font-size="9" font-family="Liberation Sans,sans-serif" fill="#d0102c">X</text><polygon points="1334.9,283.6 1346.2,288.6 1334.9,293.6 1323.500,288.6" fill="#efefef"/><polygon points="1323.500,288.6 1334.900,293.6 1334.900,306.2 1324,301.600" fill="#cfcfcf"/><polygon points="1346.200,288.6 1334.900,293.6 1334.900,306.2 1345.900,301.600" fill="#dedede"/><polygon points="1350.300,291.6 1364.200,291.6 1357.300,298.900" fill="#3c3c3c"/><path d="M1351.400 699.100L1354.100 680.500" stroke="#2a2aa8" stroke-width="1.6"/><polygon points="1354.400,678 1352.200,684.5 1355.700,685" fill="#2a2aa8"/><path d="M1351.400 699.100L1364.400 695.500" stroke="#1f9a3c" stroke-width="1.6"/><polygon points="1366.800,694.8 1360.600,694.6 1361.400,698" fill="#1f9a3c"/><path d="M1351.400 699.100L1364.400 712.100" stroke="#b02030" stroke-width="1.6"/><polygon points="1366.200,713.800 1360.400,711 1363,708.400" fill="#b02030"/><text x="1356.5" y="680" font-size="9.5" font-family="Liberation Sans,sans-serif" fill="#111">Z</text><text x="1367.5" y="695.7" font-size="9.5" font-family="Liberation Sans,sans-serif" fill="#111">Y</text><text x="1367.5" y="712.7" font-size="9.5" font-family="Liberation Sans,sans-serif" fill="#111">X</text></svg></div><div class="hl" style="left:272px;top:727px;width:1107px;background:#9c9c9c"></div><div class="hl" style="left:275px;top:748px;width:833px;background:#d9d9d9"></div><div class="vl" style="left:386px;top:728px;height:20px;background:#dcdcdc"></div><svg style="left:284px;top:729px" width="16" height="16" viewBox="0 0 16 16"><path d="M.3 .3h8.700v4h-5.400v2.300h4v3h-4v6h-3.300z" fill="#e0161c" stroke="#8a1014" stroke-width=".5"/><path d="M.800 .8v14.500" stroke="#a01016" stroke-width=".8"/><path d="M15.41 11.64L14.84 13.01L13.32 12.61L12.41 13.52L12.81 15.04L11.44 15.61L10.64 14.25L9.36 14.25L8.56 15.61L7.19 15.04L7.59 13.52L6.68 12.61L5.16 13.01L4.59 11.64L5.95 10.84L5.95 9.56L4.59 8.76L5.16 7.39L6.68 7.79L7.59 6.88L7.19 5.36L8.56 4.79L9.36 6.15L10.64 6.15L11.44 4.79L12.81 5.36L12.41 6.88L13.32 7.79L14.84 7.39L15.41 8.76L14.05 9.56L14.05 10.84Z" fill="#4470b4" stroke="#2c4e8c" stroke-width=".5"/><circle cx="10" cy="10.200" r="1.600" fill="#fff"/></svg><div class="t" style="left:303px;top:733px;font-size:11px">Start page</div><div class="a" style="left:360px;top:731px;width:13px;height:14px;background:#c9c9c9;border:1px solid #a8a8a8;border-radius:2px"></div><svg style="left:360px;top:731px" width="13" height="14"><path d="M3.700 4.200l5.600 5.600M9.300 4.200l-5.600 5.600" stroke="#fff" stroke-width="1.800"/></svg><div class="vl" style="left:540px;top:728px;height:20px;background:#dcdcdc"></div><svg style="left:399px;top:729px" width="16" height="16" viewBox="0 0 16 16"><path d="M.3 .3h8.700v4h-5.400v2.300h4v3h-4v6h-3.300z" fill="#e0161c" stroke="#8a1014" stroke-width=".5"/><path d="M.800 .8v14.500" stroke="#a01016" stroke-width=".8"/><path d="M15.41 11.64L14.84 13.01L13.32 12.61L12.41 13.52L12.81 15.04L11.44 15.61L10.64 14.25L9.36 14.25L8.56 15.61L7.19 15.04L7.59 13.52L6.68 12.61L5.16 13.01L4.59 11.64L5.95 10.84L5.95 9.56L4.59 8.76L5.16 7.39L6.68 7.79L7.59 6.88L7.19 5.36L8.56 4.79L9.36 6.15L10.64 6.15L11.44 4.79L12.81 5.36L12.41 6.88L13.32 7.79L14.84 7.39L15.41 8.76L14.05 9.56L14.05 10.84Z" fill="#4470b4" stroke="#2c4e8c" stroke-width=".5"/><circle cx="10" cy="10.200" r="1.600" fill="#fff"/></svg><div class="t" style="left:418px;top:733px;font-size:11px">Doorbell Holder : 1</div><div class="a" style="left:513px;top:731px;width:13px;height:14px;background:#c9c9c9;border:1px solid #a8a8a8;border-radius:2px"></div><svg style="left:513px;top:731px" width="13" height="14"><path d="M3.700 4.200l5.600 5.600M9.300 4.200l-5.600 5.600" stroke="#fff" stroke-width="1.800"/></svg><div class="vl" style="left:676px;top:728px;height:20px;background:#dcdcdc"></div><svg style="left:551.5px;top:729px" width="16" height="16" viewBox="0 0 16 16"><path d="M.3 .3h8.700v4h-5.400v2.300h4v3h-4v6h-3.300z" fill="#e0161c" stroke="#8a1014" stroke-width=".5"/><path d="M.800 .8v14.500" stroke="#a01016" stroke-width=".8"/><path d="M15.41 11.64L14.84 13.01L13.32 12.61L12.41 13.52L12.81 15.04L11.44 15.61L10.64 14.25L9.36 14.25L8.56 15.61L7.19 15.04L7.59 13.52L6.68 12.61L5.16 13.01L4.59 11.64L5.95 10.84L5.95 9.56L4.59 8.76L5.16 7.39L6.68 7.79L7.59 6.88L7.19 5.36L8.56 4.79L9.36 6.15L10.64 6.15L11.44 4.79L12.81 5.36L12.41 6.88L13.32 7.79L14.84 7.39L15.41 8.76L14.05 9.56L14.05 10.84Z" fill="#4470b4" stroke="#2c4e8c" stroke-width=".5"/><circle cx="10" cy="10.200" r="1.600" fill="#fff"/></svg><div class="t" style="left:570.5px;top:733px;font-size:11px">Unnamed1 : 1*</div><div class="a" style="left:650px;top:731px;width:13px;height:14px;background:#c9c9c9;border:1px solid #a8a8a8;border-radius:2px"></div><svg style="left:650px;top:731px" width="13" height="14"><path d="M3.700 4.200l5.600 5.600M9.300 4.200l-5.600 5.600" stroke="#fff" stroke-width="1.800"/></svg><div class="vl" style="left:835px;top:728px;height:20px;background:#dcdcdc"></div><svg style="left:689px;top:729px" width="16" height="16" viewBox="0 0 16 16"><path d="M.3 .3h8.700v4h-5.400v2.300h4v3h-4v6h-3.300z" fill="#e0161c" stroke="#8a1014" stroke-width=".5"/><path d="M.800 .8v14.500" stroke="#a01016" stroke-width=".8"/><path d="M15.41 11.64L14.84 13.01L13.32 12.61L12.41 13.52L12.81 15.04L11.44 15.61L10.64 14.25L9.36 14.25L8.56 15.61L7.19 15.04L7.59 13.52L6.68 12.61L5.16 13.01L4.59 11.64L5.95 10.84L5.95 9.56L4.59 8.76L5.16 7.39L6.68 7.79L7.59 6.88L7.19 5.36L8.56 4.79L9.36 6.15L10.64 6.15L11.44 4.79L12.81 5.36L12.41 6.88L13.32 7.79L14.84 7.39L15.41 8.76L14.05 9.56L14.05 10.84Z" fill="#4470b4" stroke="#2c4e8c" stroke-width=".5"/><circle cx="10" cy="10.200" r="1.600" fill="#fff"/></svg><div class="t" style="left:709px;top:733px;font-size:11px">tomu_0.4_case : 1*</div><div class="a" style="left:809.5px;top:731px;width:13px;height:14px;background:#c9c9c9;border:1px solid #a8a8a8;border-radius:2px"></div><svg style="left:809.5px;top:731px" width="13" height="14"><path d="M3.700 4.200l5.600 5.600M9.300 4.200l-5.600 5.600" stroke="#fff" stroke-width="1.800"/></svg><div class="a" style="left:836px;top:727px;width:140px;height:23px;background:#fff;border:1px solid #d9d9d9;border-top:none"></div><svg style="left:849.5px;top:730px" width="16" height="16" viewBox="0 0 16 16"><path d="M.3 .3h8.700v4h-5.400v2.300h4v3h-4v6h-3.300z" fill="#e0161c" stroke="#8a1014" stroke-width=".5"/><path d="M.800 .8v14.500" stroke="#a01016" stroke-width=".8"/><path d="M15.41 11.64L14.84 13.01L13.32 12.61L12.41 13.52L12.81 15.04L11.44 15.61L10.64 14.25L9.36 14.25L8.56 15.61L7.19 15.04L7.59 13.52L6.68 12.61L5.16 13.01L4.59 11.64L5.95 10.84L5.95 9.56L4.59 8.76L5.16 7.39L6.68 7.79L7.59 6.88L7.19 5.36L8.56 4.79L9.36 6.15L10.64 6.15L11.44 4.79L12.81 5.36L12.41 6.88L13.32 7.79L14.84 7.39L15.41 8.76L14.05 9.56L14.05 10.84Z" fill="#4470b4" stroke="#2c4e8c" stroke-width=".5"/><circle cx="10" cy="10.200" r="1.600" fill="#fff"/></svg><div class="t" style="left:868.5px;top:734px;font-size:11px">Unnamed2 : 1*</div><div class="a" style="left:947px;top:732px;width:13px;height:14px;background:#e0583b;border:1px solid #b53a22;border-radius:2px"></div><svg style="left:947px;top:732px" width="13" height="14"><path d="M3.700 4.200l5.600 5.600M9.300 4.200l-5.600 5.600" stroke="#fff" stroke-width="1.800"/></svg><div class="vl" style="left:1108px;top:728px;height:20px;background:#dcdcdc"></div><svg style="left:986px;top:729px" width="16" height="16" viewBox="0 0 16 16"><path d="M.3 .3h8.700v4h-5.400v2.300h4v3h-4v6h-3.300z" fill="#e0161c" stroke="#8a1014" stroke-width=".5"/><path d="M.800 .8v14.500" stroke="#a01016" stroke-width=".8"/><path d="M15.41 11.64L14.84 13.01L13.32 12.61L12.41 13.52L12.81 15.04L11.44 15.61L10.64 14.25L9.36 14.25L8.56 15.61L7.19 15.04L7.59 13.52L6.68 12.61L5.16 13.01L4.59 11.64L5.95 10.84L5.95 9.56L4.59 8.76L5.16 7.39L6.68 7.79L7.59 6.88L7.19 5.36L8.56 4.79L9.36 6.15L10.64 6.15L11.44 4.79L12.81 5.36L12.41 6.88L13.32 7.79L14.84 7.39L15.41 8.76L14.05 9.56L14.05 10.84Z" fill="#4470b4" stroke="#2c4e8c" stroke-width=".5"/><circle cx="10" cy="10.200" r="1.600" fill="#fff"/></svg><div class="t" style="left:1005px;top:733px;font-size:11px">Unnamed3 : 1*</div><div class="a" style="left:1084px;top:731px;width:13px;height:14px;background:#c9c9c9;border:1px solid #a8a8a8;border-radius:2px"></div><svg style="left:1084px;top:731px" width="13" height="14"><path d="M3.700 4.200l5.600 5.600M9.300 4.200l-5.600 5.600" stroke="#fff" stroke-width="1.800"/></svg><div class="a" style="left:0;top:757px;width:1443px;height:19px;background:#dadada;border:1px solid #b4b4b4"></div><div class="t" style="left:1px;top:761px;font-size:11px;letter-spacing:-0.15px">Python console</div><svg style="left:1412px;top:761px" width="30" height="12"><path d="M3.5 2.500h5v4M1.500 4.500h5v5h-5zM1.500 5.500h5M18.500 2.500l6 6M24.500 2.500l-6 6" fill="none" stroke="#111" stroke-width="1.4"/></svg><div class="a" style="left:0;top:777px;width:1443px;height:104px;background:#fff;border:1px solid #828790;border-top:2px solid #6e6e6e"></div><div class="t mono" style="left:5px;top:780px"><span style="color:#9a9a9a">&gt;&gt;&gt;</span> Gui<span style="color:#9a9a9a">.</span>ActiveDocument<span style="color:#9a9a9a">.</span>ActiveView<span style="color:#9a9a9a">.</span>setAxisCross<span style="color:#9a9a9a">(</span>True<span style="color:#9a9a9a">)</span></div><div class="t mono" style="left:5px;top:796px"><span style="color:#9a9a9a">&gt;&gt;&gt;</span> Gui<span style="color:#9a9a9a">.</span>activeDocument<span style="color:#9a9a9a">(</span><span style="color:#9a9a9a">)</span><span style="color:#9a9a9a">.</span>activeView<span style="color:#9a9a9a">(</span><span style="color:#9a9a9a">)</span><span style="color:#9a9a9a">.</span>viewRight<span style="color:#9a9a9a">(</span><span style="color:#9a9a9a">)</span></div><div class="t mono" style="left:5px;top:812px"><span style="color:#9a9a9a">&gt;&gt;&gt;</span> App<span style="color:#9a9a9a">.</span>setActiveDocument<span style="color:#9a9a9a">(</span><span style="color:#e00000">"Unnamed1"</span><span style="color:#9a9a9a">)</span></div><div class="t mono" style="left:5px;top:828px"><span style="color:#9a9a9a">&gt;&gt;&gt;</span> App<span style="color:#9a9a9a">.</span>ActiveDocument<span style="color:#9a9a9a">=</span>App<span style="color:#9a9a9a">.</span>getDocument<span style="color:#9a9a9a">(</span><span style="color:#e00000">"Unnamed1"</span><span style="color:#9a9a9a">)</span></div><div class="t mono" style="left:5px;top:844px"><span style="color:#9a9a9a">&gt;&gt;&gt;</span> Gui<span style="color:#9a9a9a">.</span>ActiveDocument<span style="color:#9a9a9a">=</span>Gui<span style="color:#9a9a9a">.</span>getDocument<span style="color:#9a9a9a">(</span><span style="color:#e00000">"Unnamed1"</span><span style="color:#9a9a9a">)</span></div><div class="t mono" style="left:5px;top:860px"><span style="color:#9a9a9a">&gt;&gt;&gt;</span> </div><div class="a" style="left:1425px;top:779px;width:17px;height:101px;background:#f0f0f0"></div><div class="a" style="left:1425px;top:845px;width:17px;height:17px;background:#cdcdcd"></div><svg style="left:1425px;top:779px" width="17" height="102"><path d="M4.500 11l4-4l4 4M4.500 91l4 4l4-4" fill="none" stroke="#505050" stroke-width="1.6"/></svg><div class="t" style="left:6px;top:890px;font-size:12px;letter-spacing:-0.32px">Preselected: Guiding_slots_sketch - Unnamed1.Part__Feature.Edge15 (5.5, 3.32067, -1.2)</div><svg style="left:1240px;top:889px" width="12" height="16"><rect x="1.500" y="1.500" width="8" height="12" rx="3.500" fill="#fff" stroke="#3c3c3c" stroke-width="1.700"/><path d="M5.500 3.500v3.500" stroke="#3c3c3c" stroke-width="1.600"/></svg><div class="t" style="left:1257px;top:890px;font-size:12px;letter-spacing:-0.2px">CAD</div><div class="dd" style="left:1283px;top:895px"></div><div class="vl" style="left:1298px;top:884px;height:24px;background:#d4d4d4"></div><div class="t" style="left:1303px;top:890px;font-size:12px;letter-spacing:-0.2px">22.61 mm x 11.72 mm</div><div class="vl" style="left:1424px;top:884px;height:24px;background:#d4d4d4"></div><svg style="left:1430px;top:897px" width="12" height="12"><path d="M8 1h2v2h-2zM8 5h2v2h-2zM4 5h2v2h-2zM0 9h2v2h-2zM4 9h2v2h-2zM8 9h2v2h-2z" fill="#b4b4b4"/></svg><div class="a" style="left:1383px;top:154px;width:61px;height:19px;background:#dadada;border:1px solid #b4b4b4"></div><div class="t" style="left:1385px;top:158px;font-size:11px;letter-spacing:-0.2px">kicad ...</div><svg style="left:1428px;top:158px" width="12" height="12"><path d="M3.500 2.500h5v4M1.500 4.500h5v5h-5zM1.500 5.500h5" fill="none" stroke="#111" stroke-width="1.400"/></svg><div class="a" style="left:1391px;top:180px;width:26px;height:26px;background:#e1e1e1;border:1px solid #adadad"></div><svg style="left:1391px;top:180px" width="26" height="26"><polygon points="6.500,13 19,6.500 19,19.500" fill="#7a7a7a"/></svg><div class="a" style="left:1423px;top:180px;width:26px;height:26px;background:#e1e1e1;border:1px solid #adadad"></div><div class="a" style="left:1430px;top:198px;width:18px;height:4px;background:linear-gradient(#555,#aaa)"></div><div class="a" style="left:1427px;top:185px;width:16px;height:14px;background:linear-gradient(#ffffff,#dcdedc);box-shadow:1px 1px 1px #888"></div><div class="a" style="left:1388px;top:219px;width:60px;height:20px;background:#fff;border:1px solid #7a7a7a"></div><div class="t mono" style="left:1388px;top:225px;width:56px;text-align:right;font-family:'Liberation Sans',sans-serif;font-size:11px;letter-spacing:0.5px">90</div><div class="a" style="left:1388px;top:260px;width:60px;height:20px;background:#fff;border:1px solid #7a7a7a"></div><div class="t mono" style="left:1388px;top:266px;width:56px;text-align:right;font-family:'Liberation Sans',sans-serif;font-size:11px;letter-spacing:0.5px">90</div><div class="a" style="left:1388px;top:301px;width:60px;height:20px;background:#fff;border:1px solid #7a7a7a"></div><div class="t mono" style="left:1388px;top:307px;width:56px;text-align:right;font-family:'Liberation Sans',sans-serif;font-size:11px;letter-spacing:0.5px">90</div><div class="a" style="left:1388px;top:339px;width:60px;height:20px;background:#fff;border:1px solid #7a7a7a"></div><div class="t mono" style="left:1388px;top:345px;width:56px;text-align:right;font-family:'Liberation Sans',sans-serif;font-size:11px;letter-spacing:0.5px">0.10</div><div class="a" style="left:1388px;top:380px;width:60px;height:20px;background:#fff;border:1px solid #7a7a7a"></div><div class="t mono" style="left:1388px;top:386px;width:56px;text-align:right;font-family:'Liberation Sans',sans-serif;font-size:11px;letter-spacing:0.5px">0.10</div><div class="a" style="left:1388px;top:421px;width:60px;height:20px;background:#fff;border:1px solid #7a7a7a"></div><div class="t mono" style="left:1388px;top:427px;width:56px;text-align:right;font-family:'Liberation Sans',sans-serif;font-size:11px;letter-spacing:0.5px">0.10</div><div class="a" style="left:1388px;top:456px;width:60px;height:34px;background:#e1e1e1;border:1px solid #adadad"></div><svg style="left:1400px;top:456px" width="34" height="34" viewBox="0 0 30 30"><rect x="5" y="11" width="20" height="12" fill="#f8f8f8" stroke="#8a8a8a" stroke-width=".8"/><path d="M7 23v4h3v-4M13.500 23v4h3v-4M20 23v4h3v-4M20 11v-4h3v4" fill="#28b428" stroke="#147814" stroke-width=".6"/><path d="M5 15l2.500 2l-2.500 2" fill="none" stroke="#555" stroke-width=".8"/><path d="M5 5c5-3.500 11-2 13.500 2l2.500-1.500l-1 7l-6.500-2.500l2.300-1.300c-2-2.500-5.500-3-9-1z" fill="#58c428" stroke="#2c7a10" stroke-width=".9"/></svg><div class="a" style="left:1388px;top:495px;width:60px;height:34px;background:#e1e1e1;border:1px solid #adadad"></div><svg style="left:1400px;top:495px" width="34" height="34" viewBox="0 0 30 30"><path d="M4 6.500h2.500v-2h3v2h3v-2h3v2h3v-2h3v2h2.500v13h-20z" fill="#4c4c4c" stroke="#2a2a2a" stroke-width=".8"/><path d="M15 10l5-1.500l5 1.500v6.500l-5 2l-5-2z" fill="#3868b4" stroke="#1c3768" stroke-width=".7"/><path d="M15 10l5 1.500l5-1.500" fill="none" stroke="#1c3768" stroke-width=".6"/><path d="M7 20c3 4 9 5 13.500 3l1 2.500l4-5.500l-7-1.500l.8 2.200c-3 1-6.500 0-9.300-2.700z" fill="#58c428" stroke="#2c7a10" stroke-width=".9"/></svg><div class="a" style="left:1388px;top:533px;width:60px;height:34px;background:#e1e1e1;border:1px solid #adadad"></div><svg style="left:1400px;top:533px" width="34" height="34" viewBox="0 0 30 30"><path d="M1 17l14-6l14 5v5l-14 7l-14-6z" fill="#e4b818" stroke="#6e5408" stroke-width=".9" stroke-linejoin="round"/><path d="M1 17l14 6l14-7l-14-5z" fill="#f4d440" stroke="#6e5408" stroke-width=".8" stroke-linejoin="round"/><path d="M15 23v5" stroke="#6e5408" stroke-width=".8"/><path d="M10 17l5-2l5 1.500l-5 2.500z" fill="#f8e468" stroke="#8a6c10" stroke-width=".6"/><path d="M16 13.500l4-1.500l4 1.500l-4 2z" fill="#f8e468" stroke="#8a6c10" stroke-width=".6"/><path d="M4 5c4-4 10-3.500 13.500 0l2-1.800l.5 7l-7-.8l2.200-2c-2.500-2.300-6.500-2.300-9.200.5z" fill="#58c428" stroke="#2c7a10" stroke-width=".9"/></svg><div class="a" style="left:1388px;top:572px;width:60px;height:34px;background:#e1e1e1;border:1px solid #adadad"></div><svg style="left:1400px;top:572px" width="34" height="34" viewBox="0 0 30 30"><path d="M7 7v15c0 4 16 4 16 0v-15z" fill="url(#gY2)" stroke="#5c5208" stroke-width=".9"/><ellipse cx="15" cy="7" rx="8" ry="3" fill="#f4ea48" stroke="#5c5208" stroke-width=".9"/><path d="M9 19.500c3 3.500 8 4 12 2l.8 2.500l4.200-5l-7-1.800l.7 2.300c-2.800 1-6 .3-8.700-2.500z" fill="#58c428" stroke="#2c7a10" stroke-width=".9"/></svg><div class="a" style="left:1388px;top:610px;width:60px;height:34px;background:#e1e1e1;border:1px solid #adadad"></div><svg style="left:1400px;top:610px" width="34" height="34" viewBox="0 0 30 30"><rect x="5.500" y="3.500" width="19" height="21" fill="#f4f4f4" stroke="#c8c8c8"/><path d="M8 8h14M8 11h14" stroke="#dcdcdc"/><path d="M9 9l4-2.500l11 11l-1 4.500l-4 .5z" fill="#e8c828" stroke="#4a4210" stroke-width=".9" stroke-linejoin="round"/><path d="M10.500 8l11 11.500M12 7l11 11" stroke="#4a4210" stroke-width=".8"/><path d="M19 22.500l4-4.500l1.500 5.500z" fill="#f0e0c0" stroke="#4a4210" stroke-width=".7"/><path d="M22.500 22l1.700-.8l.5 2.200z" fill="#222"/></svg></div></body></html>
